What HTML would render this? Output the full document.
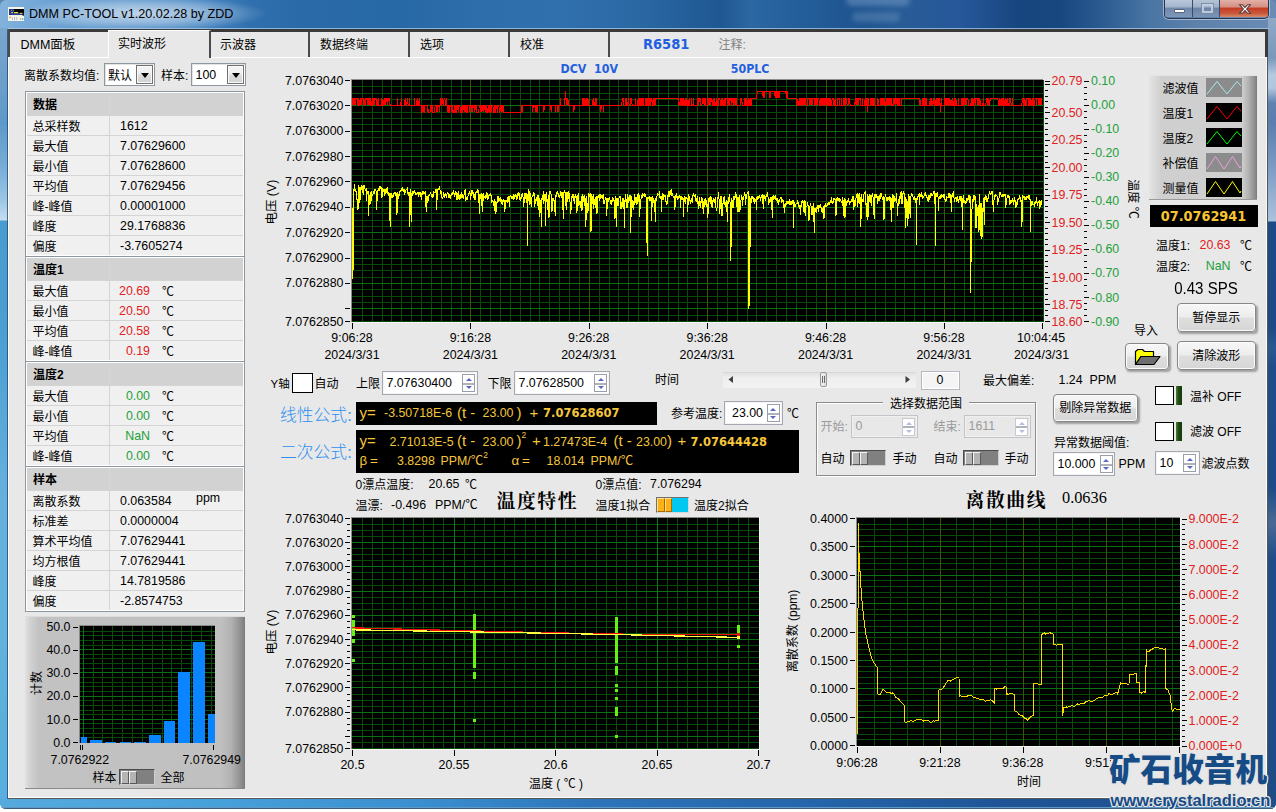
<!DOCTYPE html>
<html lang="zh"><head><meta charset="utf-8"><title>DMM PC-TOOL v1.20.02.28 by ZDD</title>
<style>
*{box-sizing:border-box;margin:0;padding:0}
html,body{width:1276px;height:812px;overflow:hidden;background:#fff}
body{position:relative;font-family:"Liberation Sans","Noto Sans CJK SC",sans-serif;font-size:12px;color:#000;line-height:1}
.a{position:absolute;white-space:nowrap}
.t{position:absolute;white-space:nowrap;height:16px;line-height:16px;font-size:12px}
.n{position:absolute;white-space:nowrap;height:16px;line-height:16px;font-size:12.4px}
.r{text-align:right}
.c{text-align:center}
svg{position:absolute;overflow:visible}
#win{position:absolute;left:0;top:0;width:1276px;height:809px;border-radius:6px 6px 6px 6px;overflow:hidden;
 background:linear-gradient(90deg,#82b2dc 0px,#6aa0d2 60px,#4a88c4 200px,#3070ae 250px,#2a6aa8 300px,#2768a6 400px,#2e6eaa 480px,#3070ac 560px,#2a68a4 640px,#1f5792 720px,#2b67a2 750px,#245e9a 800px,#1e5490 860px,#285c96 900px,#26589a 960px,#17457e 1020px,#18467f 1060px,#2a5a90 1100px,#4a75a4 1150px,#5f82ab 1200px,#6a8cb4 1276px)}
#glow{position:absolute;left:18px;top:0;width:250px;height:30px;background:radial-gradient(ellipse 125px 17px at 50% 45%,rgba(255,255,255,.62),rgba(255,255,255,.35) 55%,rgba(255,255,255,0) 100%)}
#lb{position:absolute;left:0;top:28px;width:8px;height:781px;background:linear-gradient(180deg,#7aa6ce 0,#6a9ecb 60px,#5c99c9 95px,#78aed8 140px,#9cc6e4 172px,#c6deef 192px,#4a9cd0 193px,#4a9ed2 300px,#66b0de 470px,#62b2de 600px,#5ab0da 700px,#58aee0 781px);border-right:1px solid rgba(30,70,110,.75)}
#rb{position:absolute;left:1268px;top:18px;width:8px;height:791px;background:linear-gradient(180deg,#8ea8c6 0,#8aa4c4 10px,#7a98bc 40px,#b4cae0 57px,#b0c6de 70px,#5f82b0 85px,#5a7eae 105px,#7c9cc4 150px,#a4bcd8 195px,#aac2dc 203px,#1d4b84 204px,#1d4a82 310px,#2a5990 330px,#1f4d86 350px,#1e4c84 470px,#4a6a95 505px,#1f4d86 540px,#1e4c85 791px)}
#bb{position:absolute;left:0;top:799px;width:1276px;height:10px;background:linear-gradient(90deg,#55aade 0,#48a2da 200px,#3a8fd0 420px,#2d74ba 600px,#2566ac 800px,#1f5596 1000px,#1e4f8c 1276px)}
#client{position:absolute;left:8px;top:29px;width:1260px;height:770px;background:#e8e8e8}

.tab{position:absolute;top:32px;height:25px;border-left:2px solid #4a4a4a;font-size:12px;line-height:27px;padding-left:10px;white-space:nowrap}
.wb{position:absolute;top:0;height:18px}

.tb{position:absolute;left:25px;width:220px;border:1px solid #8e96a0;background:#fff;padding:1px}
.tb .h{height:22px;background:#d2d2d2;border-bottom:0;font-weight:bold;font-size:12px;line-height:24px;padding-left:6px;position:relative}
.tb .h:after{content:"";position:absolute;left:82px;top:0;width:1px;height:22px;background:#d6d6d6}
.tb .w{height:20px;background:#f0f0f0;border-top:1px solid #d4d4d4;position:relative;line-height:19px}
.tb .w:after{content:"";position:absolute;left:82px;top:0;width:1px;height:19px;background:#d4d4d4}
.tb .k{position:absolute;left:5.5px;top:2px;font-size:12px}
.tb .v{position:absolute;left:93px;top:0.5px;font-size:12.4px}
.tb .vr{position:absolute;right:93px;top:0.5px;font-size:12.4px;text-align:right}
.tb .u{position:absolute;left:135px;top:1.5px;font-size:12px}
.cb{position:absolute;background:#fff;border:1px solid #8e96a0;box-shadow:inset 1px 1px 0 #e4e4e4}
.cbb{position:absolute;border:1px solid #707070;background:linear-gradient(180deg,#f6f6f6 0,#ececec 48%,#dcdcdc 52%,#d2d2d2 100%);box-shadow:inset 0 0 0 1px #fafafa}
.cbb:after{content:"";position:absolute;left:50%;top:50%;margin:-2px 0 0 -4px;border:4px solid transparent;border-top:5px solid #000;border-bottom:none}

.btn{position:absolute;border:1px solid #868686;border-radius:4px;background:linear-gradient(180deg,#f7f7f7 0,#ededed 47%,#dedede 53%,#d6d6d6 100%);box-shadow:inset 0 0 0 1px #fbfbfb,1.5px 2px 2px rgba(0,0,0,.32);text-align:center;font-size:12px}
.led{position:absolute;background:linear-gradient(90deg,#4f7a3a 0,#1f4a12 45%,#163a0c 100%)}
.chk{position:absolute;background:#fff;border:1px solid #000}

.inp{position:absolute;background:#fff;border:1px solid #a4a8b0;box-shadow:inset 0 0 0 1px #f4f4f4}
.inp.dis{background:#e8e8e8;border-color:#c4c4c8;box-shadow:inset 0 0 0 1px #f0f0f0}
.spn{position:absolute;width:13px;height:18px;border:1px solid #9a9ea8;background:#fff}
.spn:before{content:"";position:absolute;left:0;top:7.5px;width:11px;height:2px;background:#b0b2ba}
.spn i{position:absolute;left:2.5px;width:0;height:0;border:3px solid transparent}
.spn i.u{top:-0.5px;border-bottom:3.5px solid #5a66c4;border-top:none;top:3px}
.spn i.d{border-top:3.5px solid #5a66c4;border-bottom:none;top:11px}
.spn.dis{border-color:#c8c8d0}
.spn.dis i.u{border-bottom-color:#b8bce0}
.spn.dis i.d{border-top-color:#b8bce0}
.sw{position:absolute;width:36px;height:16px;background:#808080;border:1px solid;border-color:#4c4c4c #cfcfcf #cfcfcf #4c4c4c}
.sw b{position:absolute;top:0.5px;height:13.5px;width:8px;background:#b4b4b4;border:1px solid;border-color:#f4f4f4 #5a5a5a #5a5a5a #f4f4f4}
.fx{position:absolute;white-space:nowrap;color:#f5c63c;font-size:12.4px;height:20px;line-height:20px}
.fx.b{font-family:'DejaVu Sans Condensed','DejaVu Sans',sans-serif;font-stretch:condensed;font-weight:bold;font-size:12.8px}
.fx.g{font-size:15px}
.fx.g2{font-size:13.4px}
.fx sup{font-size:8.5px;position:relative;top:-1px;vertical-align:top;line-height:10px}
</style></head>
<body>
<div class="a" style="left:0;top:0;width:1276px;height:12px;background:#5f83ab"></div>
<div id="win">
<div id="glow"></div>
<svg style="left:8px;top:7px" width="16" height="14" viewBox="0 0 16 14"><rect x="0" y="0" width="16" height="14" fill="#f6f4ee"/><rect x="1" y="2" width="14.6" height="6" fill="#1f3a8a"/><rect x="6" y="2" width="9.6" height="4" fill="#000"/><rect x="14.6" y="2" width="1.2" height="6.8" fill="#000"/><rect x="3.3" y="5" width="1.5" height="1.3" fill="#f0d23c"/><rect x="6" y="5" width="4.2" height="1.3" fill="#f0d23c"/><rect x="11.7" y="5.8" width="2.7" height="1.1" fill="#f0d23c"/><rect x="3.2" y="3" width="1" height="1" fill="#d89a30"/><rect x="5.2" y="3" width="1" height="1" fill="#4a9a5a"/><rect x="1" y="9.8" width="2" height="1.1" fill="#eaa020"/><rect x="4" y="10" width="0.8" height="3" fill="#b8b8c0"/><rect x="6.2" y="10" width="0.8" height="3" fill="#a8a8b0"/><rect x="8.4" y="10" width="0.8" height="3" fill="#b0b0b8"/><rect x="11.8" y="11" width="1.4" height="1.6" fill="#e8b030"/><rect x="13.8" y="11.2" width="1.5" height="1.6" fill="#30c0e8"/></svg>
<div class="a" id="title" style="left:29px;top:4px;height:20px;line-height:20px;font-size:12.6px;color:#000">DMM PC-TOOL v1.20.02.28 by ZDD</div>
<div class="a" style="left:846px;top:-6px;width:64px;height:12px;border-radius:6px;background:rgba(150,180,215,.38);filter:blur(2.5px)"></div>
<div class="a" style="left:852px;top:12px;width:48px;height:10px;border-radius:5px;background:rgba(140,172,210,.30);filter:blur(2.5px)"></div>
<div class="a" style="left:1164px;top:-1px;width:105px;height:20px;border:1px solid #2a3550;border-top:none;border-radius:0 0 5px 5px;box-shadow:0 0 0 1px rgba(220,232,245,.55);overflow:hidden"><div class="wb" style="left:0;width:28px;background:linear-gradient(180deg,#bccadc 0,#a3b5cc 45%,#6d88ab 50%,#7d98b9 100%);border-right:1px solid #3a4a68"></div><div class="wb" style="left:28px;width:27px;background:linear-gradient(180deg,#b8c6d9 0,#a0b2c9 45%,#6a85a8 50%,#7a95b6 100%);border-right:1px solid #3a4a68"></div><div class="wb" style="left:55px;width:48px;background:linear-gradient(180deg,#e6b5ab 0,#d38f82 45%,#c33c22 50%,#c9583c 80%,#d98a6a 100%)"></div></div>
<div class="a" style="left:1174px;top:9px;width:11px;height:4px;background:#fff;border:1px solid #5a6478;border-radius:1px"></div>
<div class="a" style="left:1202px;top:4px;width:11px;height:9px;border:2px solid #c8d4e4;outline:1px solid #7a8aa4;opacity:.85"></div>
<svg style="left:1238px;top:2.5px" width="14" height="12" viewBox="0 0 13 11"><path d="M1.5 1.5 L4 1.5 L6.5 4 L9 1.5 L11.5 1.5 L8 5.5 L11.5 9.5 L9 9.5 L6.5 7 L4 9.5 L1.5 9.5 L5 5.5 Z" fill="#fff" stroke="#5a3a3a" stroke-width="1"/></svg>
<div id="lb"></div><div id="rb"></div><div id="bb"></div>
<div class="a" style="left:0;top:807px;width:1276px;height:2px;background:linear-gradient(180deg,#6fb6e6,#26415e)"></div>
<div id="client"></div>
<div class="a" style="left:7px;top:28px;width:1262px;height:1px;background:rgba(170,205,235,.75)"></div>
<div class="a" style="left:8px;top:29px;width:1260px;height:2.5px;background:#3a3a3a"></div>
<div class="a" style="left:8px;top:29px;width:2px;height:28px;background:#4a4a4a"></div>
<div class="a" style="left:1265px;top:29px;width:3px;height:28px;background:#3a3a3a"></div>
<div class="a" style="left:8px;top:57px;width:1258px;height:1px;background:#fff"></div>
<div class="a" style="left:8px;top:57px;width:1px;height:741px;background:#fff"></div>
<div class="a" style="left:1266px;top:57px;width:1px;height:741px;background:#fafafa"></div>
<div class="a" style="left:1267px;top:57px;width:1px;height:742px;background:#555"></div>
<div class="a" style="left:8px;top:797px;width:1259px;height:1px;background:#fff"></div>
<div class="a" style="left:8px;top:798px;width:1260px;height:1px;background:#555"></div>
<div class="tab" style="left:8px;width:100px;padding-left:10.5px;font-size:12.5px">DMM面板</div>
<div class="a" style="left:108px;top:30px;width:103px;height:28px;background:#e8e8e8;border-left:1px solid #fff;border-top:1px solid #fff;border-right:2px solid #4a4a4a;font-size:12px;line-height:26px;padding-left:9px">实时波形</div>
<div class="tab" style="left:209px;width:100px;border-left:none;padding-left:11px">示波器</div>
<div class="tab" style="left:308px;width:100px">数据终端</div>
<div class="tab" style="left:408px;width:100px">选项</div>
<div class="tab" style="left:508px;width:100px">校准</div>
<div class="tab" style="left:608px;width:10px"></div>
<div class="t" style="left:643px;top:34px;font-family:'DejaVu Sans Condensed','DejaVu Sans',sans-serif;font-stretch:condensed;font-weight:bold;font-size:14.5px;color:#1f5fe0;height:20px;line-height:20px">R6581</div>
<div class="t" style="left:718.5px;top:37px;color:#808080">注释:</div>
<div class="t" style="left:24px;top:68px;">离散系数均值:</div>
<div class="cb" style="left:104px;top:63px;width:51px;height:23px;"></div>
<div class="t" style="left:108px;top:68px;">默认</div>
<div class="cbb" style="left:136px;top:65px;width:17px;height:19px;"></div>
<div class="t" style="left:161px;top:68px;">样本:</div>
<div class="cb" style="left:191px;top:63px;width:55px;height:23px;"></div>
<div class="n" style="left:195.5px;top:67px;">100</div>
<div class="cbb" style="left:227px;top:65px;width:17px;height:19px;"></div>
<div class="tb" style="top:91px"><div class="h">数据</div><div class="w"><span class="k">总采样数</span><span class="v">1612</span></div><div class="w"><span class="k">最大值</span><span class="v">7.07629600</span></div><div class="w"><span class="k">最小值</span><span class="v">7.07628600</span></div><div class="w"><span class="k">平均值</span><span class="v">7.07629456</span></div><div class="w"><span class="k">峰-峰值</span><span class="v">0.00001000</span></div><div class="w"><span class="k">峰度</span><span class="v">29.1768836</span></div><div class="w"><span class="k">偏度</span><span class="v">-3.7605274</span></div></div>
<div class="tb" style="top:256px"><div class="h">温度1</div><div class="w"><span class="k">最大值</span><span class="vr" style="color:#e02020">20.69</span><span class="u">℃</span></div><div class="w"><span class="k">最小值</span><span class="vr" style="color:#e02020">20.50</span><span class="u">℃</span></div><div class="w"><span class="k">平均值</span><span class="vr" style="color:#e02020">20.58</span><span class="u">℃</span></div><div class="w"><span class="k">峰-峰值</span><span class="vr" style="color:#e02020">0.19</span><span class="u">℃</span></div></div>
<div class="tb" style="top:361px"><div class="h">温度2</div><div class="w"><span class="k">最大值</span><span class="vr" style="color:#22a03a">0.00</span><span class="u">℃</span></div><div class="w"><span class="k">最小值</span><span class="vr" style="color:#22a03a">0.00</span><span class="u">℃</span></div><div class="w"><span class="k">平均值</span><span class="vr" style="color:#22a03a">NaN</span><span class="u">℃</span></div><div class="w"><span class="k">峰-峰值</span><span class="vr" style="color:#22a03a">0.00</span><span class="u">℃</span></div></div>
<div class="tb" style="top:466px"><div class="h">样本</div><div class="w"><span class="k">离散系数</span><span class="v">0.063584</span><span class="u" style="left:169px;top:-2px;font-size:12.4px">ppm</span></div><div class="w"><span class="k">标准差</span><span class="v">0.0000004</span></div><div class="w"><span class="k">算术平均值</span><span class="v">7.07629441</span></div><div class="w"><span class="k">均方根值</span><span class="v">7.07629441</span></div><div class="w"><span class="k">峰度</span><span class="v">14.7819586</span></div><div class="w"><span class="k">偏度</span><span class="v">-2.8574753</span></div></div>
<svg style="left:0;top:0" width="1276" height="812" shape-rendering="crispEdges"><rect x="351" y="79" width="693" height="244" fill="#f6f6f6"/><rect x="351" y="79" width="692" height="243" fill="#8c8c8c"/><rect x="352" y="80" width="691" height="242" fill="#000"/><path d="M362.5 80V322M372.5 80V322M382.5 80V322M391.5 80V322M401.5 80V322M411.5 80V322M421.5 80V322M431.5 80V322M441.5 80V322M451.5 80V322M461.5 80V322M480.5 80V322M490.5 80V322M500.5 80V322M510.5 80V322M520.5 80V322M530.5 80V322M539.5 80V322M549.5 80V322M559.5 80V322M569.5 80V322M579.5 80V322M599.5 80V322M609.5 80V322M618.5 80V322M628.5 80V322M638.5 80V322M648.5 80V322M658.5 80V322M668.5 80V322M678.5 80V322M687.5 80V322M697.5 80V322M717.5 80V322M727.5 80V322M737.5 80V322M747.5 80V322M756.5 80V322M766.5 80V322M776.5 80V322M786.5 80V322M796.5 80V322M806.5 80V322M816.5 80V322M835.5 80V322M845.5 80V322M855.5 80V322M865.5 80V322M875.5 80V322M885.5 80V322M895.5 80V322M904.5 80V322M914.5 80V322M924.5 80V322M934.5 80V322M954.5 80V322M964.5 80V322M974.5 80V322M983.5 80V322M993.5 80V322M1003.5 80V322M1013.5 80V322M1023.5 80V322M1033.5 80V322M1043.5 80V322" stroke="#084c08" stroke-width="1" fill="none"/><path d="M352 86.5H1043M352 93.5H1043M352 99.5H1043M352 112.5H1043M352 118.5H1043M352 124.5H1043M352 137.5H1043M352 143.5H1043M352 150.5H1043M352 162.5H1043M352 169.5H1043M352 175.5H1043M352 188.5H1043M352 194.5H1043M352 201.5H1043M352 213.5H1043M352 220.5H1043M352 226.5H1043M352 239.5H1043M352 245.5H1043M352 251.5H1043M352 264.5H1043M352 270.5H1043M352 277.5H1043M352 289.5H1043M352 296.5H1043M352 302.5H1043M352 315.5H1043M352 321.5H1043" stroke="#084c08" stroke-width="1" fill="none"/><path d="M352 105.5H1043M352 131.5H1043M352 156.5H1043M352 181.5H1043M352 207.5H1043M352 232.5H1043M352 258.5H1043M352 283.5H1043M352 308.5H1043" stroke="#087214" stroke-width="1" fill="none"/><path d="M470.5 80V322M589.5 80V322M707.5 80V322M826.5 80V322M944.5 80V322" stroke="#3c5800" stroke-width="1" fill="none"/><path d="M352 98.4 352.4 98.4 352.9 105.2 353.3 98.4 353.7 105.2 354.1 98.4 354.6 98.4 355 105.2 355.4 98.4 355.9 98.4 356.3 98.4 356.7 98.4 357.1 98.4 357.6 105.2 358 98.4 358.4 98.4 358.9 105.2 359.3 105.2 359.7 105.2 360.1 98.4 360.6 105.2 361 98.4 361.4 105.2 361.9 98.4 362.3 98.4 362.7 98.4 363.1 98.4 363.6 105.2 364 98.4 364.4 105.2 364.8 105.2 365.3 98.4 365.7 105.2 366.1 98.4 366.6 98.4 367 98.4 367.4 105.2 367.8 98.4 368.3 98.4 368.7 105.2 369.1 98.4 369.6 98.4 370 105.2 370.4 105.2 370.8 98.4 371.3 105.2 371.7 105.2 372.1 105.2 372.6 105.2 373 98.4 373.4 105.2 373.8 98.4 374.3 98.4 374.7 105.2 375.1 98.4 375.6 98.4 376 98.4 376.4 105.2 376.8 105.2 377.3 105.2 377.7 105.2 378.1 98.4 378.6 105.2 379 105.2 379.4 105.2 379.8 105.2 380.3 105.2 380.7 105.2 381.1 105.2 381.6 105.2 382 98.4 382.4 105.2 382.8 105.2 383.3 105.2 383.7 105.2 384.1 98.4 384.6 98.4 385 105.2 385.4 98.4 385.8 105.2 386.3 98.4 386.7 98.4 387.1 98.4 387.5 105.2 388 98.4 388.4 98.4 388.8 98.4 389.3 105.2 389.7 98.4 390.1 105.2 390.5 105.2 391 105.2 391.4 105.2 391.8 105.2 392.3 105.2 392.7 105.2 393.1 105.2 393.5 105.2 394 105.2 394.4 105.2 394.8 105.2 395.3 105.2 395.7 105.2 396.1 105.2 396.5 105.2 397 105.2 397.4 98.4 397.8 105.2 398.3 105.2 398.7 105.2 399.1 105.2 399.5 105.2 400 105.2 400.4 105.2 400.8 105.2 401.3 98.4 401.7 105.2 402.1 105.2 402.5 105.2 403 105.2 403.4 105.2 403.8 105.2 404.3 105.2 404.7 105.2 405.1 98.4 405.5 98.4 406 105.2 406.4 105.2 406.8 105.2 407.3 98.4 407.7 98.4 408.1 105.2 408.5 105.2 409 105.2 409.4 98.4 409.8 105.2 410.2 105.2 410.7 105.2 411.1 105.2 411.5 105.2 412 105.2 412.4 105.2 412.8 105.2 413.2 105.2 413.7 105.2 414.1 105.2 414.5 98.4 415 105.2 415.4 105.2 415.8 105.2 416.2 105.2 416.7 105.2 417.1 98.4 417.5 105.2 418 105.2 418.4 105.2 418.8 105.2 419.2 98.4 419.7 105.2 420.1 105.2 420.5 105.2 421 105.2 421.4 112.1 421.8 112.1 422.2 112.1 422.7 105.2 423.1 105.2 423.5 105.2 424 112.1 424.4 112.1 424.8 105.2 425.2 105.2 425.7 105.2 426.1 105.2 426.5 105.2 427 105.2 427.4 112.1 427.8 105.2 428.2 112.1 428.7 112.1 429.1 112.1 429.5 112.1 430 112.1 430.4 105.2 430.8 105.2 431.2 112.1 431.7 105.2 432.1 105.2 432.5 105.2 432.9 112.1 433.4 112.1 433.8 112.1 434.2 112.1 434.7 112.1 435.1 105.2 435.5 105.2 435.9 105.2 436.4 112.1 436.8 105.2 437.2 105.2 437.7 112.1 438.1 105.2 438.5 105.2 438.9 105.2 439.4 105.2 439.8 112.1 440.2 98.4 440.7 105.2 441.1 98.4 441.5 105.2 441.9 105.2 442.4 98.4 442.8 98.4 443.2 105.2 443.7 105.2 444.1 98.4 444.5 98.4 444.9 98.4 445.4 105.2 445.8 105.2 446.2 98.4 446.7 105.2 447.1 105.2 447.5 105.2 447.9 112.1 448.4 105.2 448.8 112.1 449.2 112.1 449.7 105.2 450.1 105.2 450.5 105.2 450.9 105.2 451.4 112.1 451.8 105.2 452.2 105.2 452.7 112.1 453.1 112.1 453.5 112.1 453.9 112.1 454.4 105.2 454.8 112.1 455.2 112.1 455.6 112.1 456.1 105.2 456.5 112.1 456.9 112.1 457.4 105.2 457.8 105.2 458.2 112.1 458.6 105.2 459.1 105.2 459.5 105.2 459.9 105.2 460.4 112.1 460.8 112.1 461.2 112.1 461.6 112.1 462.1 105.2 462.5 112.1 462.9 112.1 463.4 105.2 463.8 105.2 464.2 112.1 464.6 105.2 465.1 105.2 465.5 105.2 465.9 112.1 466.4 105.2 466.8 112.1 467.2 112.1 467.6 105.2 468.1 105.2 468.5 105.2 468.9 105.2 469.4 105.2 469.8 112.1 470.2 105.2 470.6 105.2 471.1 105.2 471.5 105.2 471.9 112.1 472.4 105.2 472.8 112.1 473.2 105.2 473.6 105.2 474.1 105.2 474.5 105.2 474.9 112.1 475.4 105.2 475.8 105.2 476.2 105.2 476.6 112.1 477.1 112.1 477.5 112.1 477.9 112.1 478.4 112.1 478.8 112.1 479.2 105.2 479.6 105.2 480.1 105.2 480.5 112.1 480.9 105.2 481.3 105.2 481.8 112.1 482.2 105.2 482.6 105.2 483.1 112.1 483.5 105.2 483.9 112.1 484.3 105.2 484.8 105.2 485.2 105.2 485.6 112.1 486.1 105.2 486.5 105.2 486.9 112.1 487.3 112.1 487.8 112.1 488.2 105.2 488.6 112.1 489.1 105.2 489.5 105.2 489.9 112.1 490.3 112.1 490.8 105.2 491.2 105.2 491.6 112.1 492.1 105.2 492.5 105.2 492.9 105.2 493.3 112.1 493.8 112.1 494.2 112.1 494.6 105.2 495.1 112.1 495.5 112.1 495.9 105.2 496.3 105.2 496.8 105.2 497.2 112.1 497.6 112.1 498.1 105.2 498.5 105.2 498.9 105.2 499.3 112.1 499.8 112.1 500.2 105.2 500.6 105.2 501.1 112.1 501.5 105.2 501.9 105.2 502.3 105.2 502.8 112.1 503.2 105.2 503.6 112.1 504 112.1 504.5 112.1 504.9 112.1 505.3 112.1 505.8 112.1 506.2 112.1 506.6 112.1 507 112.1 507.5 112.1 507.9 112.1 508.3 112.1 508.8 112.1 509.2 112.1 509.6 112.1 510 112.1 510.5 112.1 510.9 112.1 511.3 112.1 511.8 112.1 512.2 112.1 512.6 112.1 513 112.1 513.5 112.1 513.9 112.1 514.3 112.1 514.8 112.1 515.2 112.1 515.6 112.1 516 112.1 516.5 112.1 516.9 112.1 517.3 112.1 517.8 112.1 518.2 112.1 518.6 112.1 519 112.1 519.5 112.1 519.9 112.1 520.3 112.1 520.8 112.1 521.2 112.1 521.6 112.1 522 105.2 522.5 112.1 522.9 105.2 523.3 105.2 523.8 105.2 524.2 105.2 524.6 105.2 525 105.2 525.5 105.2 525.9 105.2 526.3 105.2 526.7 105.2 527.2 105.2 527.6 105.2 528 105.2 528.5 105.2 528.9 105.2 529.3 105.2 529.7 105.2 530.2 105.2 530.6 105.2 531 105.2 531.5 105.2 531.9 105.2 532.3 105.2 532.7 112.1 533.2 105.2 533.6 105.2 534 105.2 534.5 105.2 534.9 105.2 535.3 112.1 535.7 105.2 536.2 105.2 536.6 105.2 537 112.1 537.5 112.1 537.9 105.2 538.3 105.2 538.7 105.2 539.2 105.2 539.6 105.2 540 105.2 540.5 105.2 540.9 105.2 541.3 105.2 541.7 105.2 542.2 105.2 542.6 105.2 543 105.2 543.5 105.2 543.9 112.1 544.3 105.2 544.7 105.2 545.2 105.2 545.6 105.2 546 105.2 546.5 105.2 546.9 105.2 547.3 105.2 547.7 105.2 548.2 105.2 548.6 105.2 549 105.2 549.4 105.2 549.9 105.2 550.3 105.2 550.7 105.2 551.2 112.1 551.6 105.2 552 105.2 552.4 105.2 552.9 105.2 553.3 105.2 553.7 105.2 554.2 105.2 554.6 105.2 555 105.2 555.4 112.1 555.9 105.2 556.3 105.2 556.7 105.2 557.2 105.2 557.6 105.2 558 112.1 558.4 105.2 558.9 105.2 559.3 105.2 559.7 105.2 560.2 105.2 560.6 98.4 561 105.2 561.4 105.2 561.9 105.2 562.3 105.2 562.7 105.2 563.2 105.2 563.6 105.2 564 105.2 564.4 105.2 564.9 98.4 565.3 98.4 565.7 91.5 566.2 105.2 566.6 98.4 567 105.2 567.4 98.4 567.9 98.4 568.3 105.2 568.7 105.2 569.2 105.2 569.6 105.2 570 105.2 570.4 105.2 570.9 105.2 571.3 105.2 571.7 105.2 572.1 105.2 572.6 105.2 573 105.2 573.4 105.2 573.9 112.1 574.3 105.2 574.7 105.2 575.1 105.2 575.6 105.2 576 105.2 576.4 105.2 576.9 105.2 577.3 105.2 577.7 105.2 578.1 105.2 578.6 105.2 579 105.2 579.4 105.2 579.9 105.2 580.3 105.2 580.7 105.2 581.1 105.2 581.6 105.2 582 105.2 582.4 105.2 582.9 98.4 583.3 98.4 583.7 105.2 584.1 105.2 584.6 105.2 585 98.4 585.4 105.2 585.9 105.2 586.3 105.2 586.7 98.4 587.1 105.2 587.6 105.2 588 98.4 588.4 105.2 588.9 105.2 589.3 105.2 589.7 105.2 590.1 105.2 590.6 105.2 591 105.2 591.4 105.2 591.9 105.2 592.3 105.2 592.7 105.2 593.1 98.4 593.6 98.4 594 105.2 594.4 105.2 594.8 105.2 595.3 98.4 595.7 105.2 596.1 105.2 596.6 98.4 597 105.2 597.4 105.2 597.8 105.2 598.3 105.2 598.7 105.2 599.1 105.2 599.6 105.2 600 105.2 600.4 105.2 600.8 112.1 601.3 105.2 601.7 105.2 602.1 105.2 602.6 105.2 603 105.2 603.4 112.1 603.8 105.2 604.3 105.2 604.7 105.2 605.1 105.2 605.6 105.2 606 105.2 606.4 105.2 606.8 105.2 607.3 105.2 607.7 105.2 608.1 105.2 608.6 105.2 609 105.2 609.4 105.2 609.8 105.2 610.3 105.2 610.7 105.2 611.1 105.2 611.6 105.2 612 105.2 612.4 105.2 612.8 105.2 613.3 105.2 613.7 105.2 614.1 105.2 614.6 105.2 615 105.2 615.4 105.2 615.8 105.2 616.3 105.2 616.7 105.2 617.1 105.2 617.5 105.2 618 105.2 618.4 105.2 618.8 105.2 619.3 105.2 619.7 105.2 620.1 105.2 620.5 105.2 621 105.2 621.4 105.2 621.8 105.2 622.3 98.4 622.7 98.4 623.1 98.4 623.5 98.4 624 105.2 624.4 105.2 624.8 105.2 625.3 105.2 625.7 98.4 626.1 98.4 626.5 105.2 627 105.2 627.4 105.2 627.8 105.2 628.3 98.4 628.7 98.4 629.1 105.2 629.5 105.2 630 105.2 630.4 105.2 630.8 98.4 631.3 98.4 631.7 98.4 632.1 105.2 632.5 105.2 633 105.2 633.4 105.2 633.8 105.2 634.3 105.2 634.7 105.2 635.1 105.2 635.5 98.4 636 105.2 636.4 105.2 636.8 105.2 637.3 105.2 637.7 105.2 638.1 98.4 638.5 105.2 639 105.2 639.4 105.2 639.8 98.4 640.2 98.4 640.7 105.2 641.1 105.2 641.5 98.4 642 98.4 642.4 105.2 642.8 98.4 643.2 98.4 643.7 105.2 644.1 105.2 644.5 105.2 645 105.2 645.4 105.2 645.8 98.4 646.2 98.4 646.7 105.2 647.1 105.2 647.5 98.4 648 98.4 648.4 105.2 648.8 105.2 649.2 105.2 649.7 98.4 650.1 105.2 650.5 105.2 651 98.4 651.4 98.4 651.8 98.4 652.2 105.2 652.7 105.2 653.1 98.4 653.5 105.2 654 105.2 654.4 105.2 654.8 98.4 655.2 105.2 655.7 98.4 656.1 98.4 656.5 98.4 657 98.4 657.4 98.4 657.8 98.4 658.2 98.4 658.7 98.4 659.1 98.4 659.5 98.4 660 98.4 660.4 98.4 660.8 98.4 661.2 98.4 661.7 98.4 662.1 98.4 662.5 98.4 662.9 98.4 663.4 98.4 663.8 98.4 664.2 98.4 664.7 98.4 665.1 98.4 665.5 98.4 665.9 98.4 666.4 98.4 666.8 98.4 667.2 98.4 667.7 98.4 668.1 98.4 668.5 98.4 668.9 98.4 669.4 98.4 669.8 98.4 670.2 98.4 670.7 98.4 671.1 98.4 671.5 98.4 671.9 98.4 672.4 98.4 672.8 98.4 673.2 98.4 673.7 98.4 674.1 98.4 674.5 98.4 674.9 98.4 675.4 98.4 675.8 98.4 676.2 98.4 676.7 98.4 677.1 98.4 677.5 98.4 677.9 98.4 678.4 105.2 678.8 98.4 679.2 105.2 679.7 105.2 680.1 105.2 680.5 98.4 680.9 98.4 681.4 98.4 681.8 105.2 682.2 98.4 682.7 105.2 683.1 105.2 683.5 105.2 683.9 98.4 684.4 105.2 684.8 105.2 685.2 98.4 685.6 105.2 686.1 105.2 686.5 98.4 686.9 98.4 687.4 105.2 687.8 105.2 688.2 105.2 688.6 105.2 689.1 98.4 689.5 98.4 689.9 105.2 690.4 105.2 690.8 105.2 691.2 105.2 691.6 98.4 692.1 105.2 692.5 105.2 692.9 105.2 693.4 98.4 693.8 105.2 694.2 105.2 694.6 105.2 695.1 105.2 695.5 105.2 695.9 105.2 696.4 105.2 696.8 105.2 697.2 105.2 697.6 98.4 698.1 98.4 698.5 105.2 698.9 98.4 699.4 98.4 699.8 98.4 700.2 105.2 700.6 98.4 701.1 105.2 701.5 105.2 701.9 105.2 702.4 98.4 702.8 98.4 703.2 98.4 703.6 98.4 704.1 105.2 704.5 98.4 704.9 98.4 705.4 98.4 705.8 105.2 706.2 105.2 706.6 105.2 707.1 105.2 707.5 105.2 707.9 98.4 708.4 105.2 708.8 98.4 709.2 105.2 709.6 98.4 710.1 105.2 710.5 98.4 710.9 98.4 711.3 98.4 711.8 98.4 712.2 105.2 712.6 105.2 713.1 98.4 713.5 98.4 713.9 105.2 714.3 105.2 714.8 98.4 715.2 105.2 715.6 105.2 716.1 105.2 716.5 98.4 716.9 98.4 717.3 105.2 717.8 105.2 718.2 105.2 718.6 98.4 719.1 98.4 719.5 98.4 719.9 98.4 720.3 105.2 720.8 105.2 721.2 105.2 721.6 98.4 722.1 105.2 722.5 98.4 722.9 98.4 723.3 105.2 723.8 105.2 724.2 98.4 724.6 105.2 725.1 105.2 725.5 98.4 725.9 98.4 726.3 98.4 726.8 98.4 727.2 98.4 727.6 105.2 728.1 105.2 728.5 98.4 728.9 98.4 729.3 98.4 729.8 105.2 730.2 98.4 730.6 98.4 731.1 98.4 731.5 105.2 731.9 105.2 732.3 98.4 732.8 98.4 733.2 98.4 733.6 105.2 734 105.2 734.5 98.4 734.9 98.4 735.3 105.2 735.8 98.4 736.2 98.4 736.6 105.2 737 105.2 737.5 105.2 737.9 105.2 738.3 105.2 738.8 105.2 739.2 105.2 739.6 105.2 740 105.2 740.5 98.4 740.9 105.2 741.3 98.4 741.8 98.4 742.2 105.2 742.6 105.2 743 105.2 743.5 105.2 743.9 105.2 744.3 105.2 744.8 98.4 745.2 98.4 745.6 105.2 746 105.2 746.5 105.2 746.9 98.4 747.3 105.2 747.8 105.2 748.2 105.2 748.6 98.4 749 98.4 749.5 105.2 749.9 105.2 750.3 98.4 750.8 105.2 751.2 105.2 751.6 105.2 752 98.4 752.5 98.4 752.9 98.4 753.3 98.4 753.8 98.4 754.2 98.4 754.6 98.4 755 98.4 755.5 98.4 755.9 98.4 756.3 98.4 756.7 98.4 757.2 91.5 757.6 91.5 758 91.5 758.5 91.5 758.9 91.5 759.3 91.5 759.7 91.5 760.2 91.5 760.6 91.5 761 91.5 761.5 91.5 761.9 91.5 762.3 91.5 762.7 91.5 763.2 98.4 763.6 91.5 764 91.5 764.5 98.4 764.9 91.5 765.3 91.5 765.7 91.5 766.2 91.5 766.6 91.5 767 91.5 767.5 91.5 767.9 91.5 768.3 91.5 768.7 91.5 769.2 91.5 769.6 91.5 770 98.4 770.5 91.5 770.9 91.5 771.3 91.5 771.7 91.5 772.2 91.5 772.6 91.5 773 91.5 773.5 91.5 773.9 91.5 774.3 91.5 774.7 91.5 775.2 98.4 775.6 91.5 776 91.5 776.5 98.4 776.9 91.5 777.3 98.4 777.7 91.5 778.2 91.5 778.6 91.5 779 98.4 779.4 91.5 779.9 91.5 780.3 91.5 780.7 91.5 781.2 91.5 781.6 91.5 782 91.5 782.4 91.5 782.9 91.5 783.3 91.5 783.7 91.5 784.2 91.5 784.6 91.5 785 91.5 785.4 91.5 785.9 91.5 786.3 98.4 786.7 91.5 787.2 91.5 787.6 91.5 788 98.4 788.4 98.4 788.9 98.4 789.3 98.4 789.7 98.4 790.2 98.4 790.6 98.4 791 98.4 791.4 98.4 791.9 98.4 792.3 98.4 792.7 98.4 793.2 98.4 793.6 98.4 794 98.4 794.4 98.4 794.9 98.4 795.3 98.4 795.7 98.4 796.2 98.4 796.6 105.2 797 98.4 797.4 105.2 797.9 105.2 798.3 105.2 798.7 105.2 799.2 98.4 799.6 105.2 800 105.2 800.4 98.4 800.9 105.2 801.3 98.4 801.7 105.2 802.1 105.2 802.6 98.4 803 105.2 803.4 98.4 803.9 98.4 804.3 105.2 804.7 98.4 805.1 105.2 805.6 98.4 806 105.2 806.4 105.2 806.9 105.2 807.3 105.2 807.7 98.4 808.1 98.4 808.6 98.4 809 98.4 809.4 105.2 809.9 98.4 810.3 98.4 810.7 105.2 811.1 98.4 811.6 98.4 812 105.2 812.4 98.4 812.9 98.4 813.3 98.4 813.7 98.4 814.1 98.4 814.6 98.4 815 105.2 815.4 105.2 815.9 98.4 816.3 105.2 816.7 98.4 817.1 98.4 817.6 105.2 818 98.4 818.4 98.4 818.9 98.4 819.3 105.2 819.7 105.2 820.1 105.2 820.6 98.4 821 98.4 821.4 98.4 821.9 105.2 822.3 105.2 822.7 98.4 823.1 105.2 823.6 98.4 824 105.2 824.4 105.2 824.8 98.4 825.3 105.2 825.7 98.4 826.1 105.2 826.6 105.2 827 98.4 827.4 98.4 827.8 105.2 828.3 98.4 828.7 105.2 829.1 105.2 829.6 98.4 830 98.4 830.4 105.2 830.8 105.2 831.3 105.2 831.7 105.2 832.1 98.4 832.6 98.4 833 98.4 833.4 98.4 833.8 105.2 834.3 105.2 834.7 105.2 835.1 98.4 835.6 105.2 836 105.2 836.4 105.2 836.8 105.2 837.3 105.2 837.7 98.4 838.1 98.4 838.6 98.4 839 98.4 839.4 98.4 839.8 105.2 840.3 105.2 840.7 105.2 841.1 105.2 841.6 98.4 842 105.2 842.4 105.2 842.8 105.2 843.3 105.2 843.7 98.4 844.1 105.2 844.6 105.2 845 98.4 845.4 105.2 845.8 98.4 846.3 98.4 846.7 98.4 847.1 105.2 847.5 105.2 848 105.2 848.4 98.4 848.8 105.2 849.3 98.4 849.7 98.4 850.1 105.2 850.5 105.2 851 105.2 851.4 105.2 851.8 105.2 852.3 105.2 852.7 105.2 853.1 105.2 853.5 105.2 854 105.2 854.4 105.2 854.8 105.2 855.3 98.4 855.7 98.4 856.1 105.2 856.5 98.4 857 105.2 857.4 98.4 857.8 98.4 858.3 98.4 858.7 105.2 859.1 98.4 859.5 98.4 860 98.4 860.4 98.4 860.8 105.2 861.3 105.2 861.7 105.2 862.1 105.2 862.5 98.4 863 105.2 863.4 105.2 863.8 105.2 864.3 105.2 864.7 105.2 865.1 98.4 865.5 105.2 866 105.2 866.4 105.2 866.8 98.4 867.3 112.1 867.7 98.4 868.1 98.4 868.5 105.2 869 105.2 869.4 105.2 869.8 105.2 870.2 105.2 870.7 98.4 871.1 98.4 871.5 98.4 872 105.2 872.4 98.4 872.8 105.2 873.2 105.2 873.7 98.4 874.1 98.4 874.5 98.4 875 105.2 875.4 105.2 875.8 105.2 876.2 105.2 876.7 105.2 877.1 105.2 877.5 105.2 878 98.4 878.4 105.2 878.8 105.2 879.2 105.2 879.7 105.2 880.1 105.2 880.5 105.2 881 98.4 881.4 105.2 881.8 98.4 882.2 105.2 882.7 98.4 883.1 98.4 883.5 98.4 884 105.2 884.4 105.2 884.8 98.4 885.2 105.2 885.7 105.2 886.1 105.2 886.5 98.4 887 105.2 887.4 98.4 887.8 105.2 888.2 98.4 888.7 105.2 889.1 98.4 889.5 98.4 890 105.2 890.4 105.2 890.8 98.4 891.2 105.2 891.7 98.4 892.1 105.2 892.5 105.2 892.9 105.2 893.4 105.2 893.8 98.4 894.2 98.4 894.7 98.4 895.1 105.2 895.5 98.4 895.9 105.2 896.4 98.4 896.8 98.4 897.2 98.4 897.7 105.2 898.1 105.2 898.5 98.4 898.9 105.2 899.4 98.4 899.8 105.2 900.2 105.2 900.7 105.2 901.1 105.2 901.5 105.2 901.9 98.4 902.4 98.4 902.8 98.4 903.2 98.4 903.7 98.4 904.1 98.4 904.5 98.4 904.9 98.4 905.4 98.4 905.8 98.4 906.2 98.4 906.7 98.4 907.1 98.4 907.5 98.4 907.9 98.4 908.4 98.4 908.8 98.4 909.2 98.4 909.7 98.4 910.1 98.4 910.5 98.4 910.9 98.4 911.4 98.4 911.8 98.4 912.2 98.4 912.7 98.4 913.1 98.4 913.5 98.4 913.9 98.4 914.4 98.4 914.8 98.4 915.2 98.4 915.6 98.4 916.1 98.4 916.5 98.4 916.9 98.4 917.4 98.4 917.8 98.4 918.2 98.4 918.6 98.4 919.1 98.4 919.5 105.2 919.9 98.4 920.4 105.2 920.8 105.2 921.2 105.2 921.6 105.2 922.1 105.2 922.5 98.4 922.9 105.2 923.4 98.4 923.8 105.2 924.2 105.2 924.6 98.4 925.1 105.2 925.5 105.2 925.9 98.4 926.4 98.4 926.8 105.2 927.2 105.2 927.6 105.2 928.1 105.2 928.5 105.2 928.9 105.2 929.4 105.2 929.8 105.2 930.2 98.4 930.6 105.2 931.1 98.4 931.5 98.4 931.9 105.2 932.4 105.2 932.8 105.2 933.2 98.4 933.6 98.4 934.1 105.2 934.5 105.2 934.9 98.4 935.4 105.2 935.8 105.2 936.2 98.4 936.6 105.2 937.1 105.2 937.5 98.4 937.9 105.2 938.4 105.2 938.8 98.4 939.2 105.2 939.6 98.4 940.1 105.2 940.5 112.1 940.9 105.2 941.3 98.4 941.8 105.2 942.2 105.2 942.6 105.2 943.1 105.2 943.5 105.2 943.9 105.2 944.3 105.2 944.8 98.4 945.2 105.2 945.6 98.4 946.1 105.2 946.5 98.4 946.9 105.2 947.3 98.4 947.8 105.2 948.2 105.2 948.6 98.4 949.1 98.4 949.5 105.2 949.9 98.4 950.3 105.2 950.8 105.2 951.2 105.2 951.6 105.2 952.1 98.4 952.5 98.4 952.9 105.2 953.3 105.2 953.8 105.2 954.2 98.4 954.6 105.2 955.1 105.2 955.5 98.4 955.9 98.4 956.3 105.2 956.8 105.2 957.2 105.2 957.6 105.2 958.1 105.2 958.5 98.4 958.9 105.2 959.3 105.2 959.8 105.2 960.2 105.2 960.6 105.2 961.1 105.2 961.5 98.4 961.9 105.2 962.3 98.4 962.8 105.2 963.2 105.2 963.6 105.2 964 98.4 964.5 105.2 964.9 98.4 965.3 105.2 965.8 98.4 966.2 98.4 966.6 105.2 967 98.4 967.5 98.4 967.9 98.4 968.3 105.2 968.8 105.2 969.2 105.2 969.6 105.2 970 105.2 970.5 105.2 970.9 105.2 971.3 98.4 971.8 105.2 972.2 105.2 972.6 105.2 973 98.4 973.5 105.2 973.9 105.2 974.3 98.4 974.8 98.4 975.2 105.2 975.6 105.2 976 98.4 976.5 98.4 976.9 98.4 977.3 98.4 977.8 105.2 978.2 98.4 978.6 98.4 979 105.2 979.5 105.2 979.9 98.4 980.3 105.2 980.8 105.2 981.2 105.2 981.6 105.2 982 105.2 982.5 105.2 982.9 105.2 983.3 98.4 983.8 105.2 984.2 105.2 984.6 105.2 985 105.2 985.5 105.2 985.9 105.2 986.3 98.4 986.7 98.4 987.2 98.4 987.6 105.2 988 98.4 988.5 105.2 988.9 98.4 989.3 105.2 989.7 105.2 990.2 98.4 990.6 98.4 991 98.4 991.5 98.4 991.9 98.4 992.3 98.4 992.7 98.4 993.2 98.4 993.6 98.4 994 98.4 994.5 98.4 994.9 98.4 995.3 98.4 995.7 98.4 996.2 98.4 996.6 98.4 997 98.4 997.5 98.4 997.9 98.4 998.3 105.2 998.7 105.2 999.2 105.2 999.6 105.2 1000 98.4 1000.5 105.2 1000.9 105.2 1001.3 98.4 1001.7 105.2 1002.2 98.4 1002.6 105.2 1003 105.2 1003.5 105.2 1003.9 98.4 1004.3 105.2 1004.7 105.2 1005.2 105.2 1005.6 105.2 1006 98.4 1006.5 105.2 1006.9 105.2 1007.3 105.2 1007.7 98.4 1008.2 105.2 1008.6 105.2 1009 105.2 1009.4 105.2 1009.9 98.4 1010.3 98.4 1010.7 98.4 1011.2 105.2 1011.6 105.2 1012 105.2 1012.4 98.4 1012.9 105.2 1013.3 105.2 1013.7 105.2 1014.2 105.2 1014.6 105.2 1015 105.2 1015.4 105.2 1015.9 105.2 1016.3 105.2 1016.7 105.2 1017.2 105.2 1017.6 105.2 1018 105.2 1018.4 105.2 1018.9 105.2 1019.3 105.2 1019.7 105.2 1020.2 105.2 1020.6 105.2 1021 105.2 1021.4 105.2 1021.9 105.2 1022.3 98.4 1022.7 98.4 1023.2 98.4 1023.6 105.2 1024 105.2 1024.4 105.2 1024.9 98.4 1025.3 105.2 1025.7 105.2 1026.2 105.2 1026.6 98.4 1027 98.4 1027.4 98.4 1027.9 98.4 1028.3 98.4 1028.7 105.2 1029.2 105.2 1029.6 98.4 1030 105.2 1030.4 98.4 1030.9 98.4 1031.3 105.2 1031.7 105.2 1032.1 105.2 1032.6 98.4 1033 98.4 1033.4 98.4 1033.9 105.2 1034.3 105.2 1034.7 105.2 1035.1 98.4 1035.6 98.4 1036 98.4 1036.4 105.2 1036.9 98.4 1037.3 98.4 1037.7 98.4 1038.1 98.4 1038.6 105.2 1039 98.4 1039.4 105.2 1039.9 98.4 1040.3 105.2 1040.7 98.4 1041.1 98.4 1041.6 105.2 1042 98.4" stroke="#ff0000" stroke-width="1" fill="none" stroke-linejoin="miter"/><path d="M352 208 352.4 209 352.9 279 353.3 250 353.7 206 354.1 184.5 354.6 188.4 355 191 355.4 188.8 355.9 191.5 356.3 191.4 356.7 199.2 357.1 199.2 357.6 203.2 358 209.6 358.4 191 358.9 185 359.3 192 359.7 202.7 360.1 198.7 360.6 187.8 361 188.3 361.4 190.3 361.9 185.5 362.3 188.6 362.7 187.5 363.1 194.8 363.6 191.5 364 185.5 364.4 186.4 364.8 188.6 365.3 189.4 365.7 190.7 366.1 188.3 366.6 201.2 367 194 367.4 191.2 367.8 191.3 368.3 191.3 368.7 216.4 369.1 201.6 369.6 198.1 370 194.8 370.4 191.7 370.8 203.7 371.3 190.8 371.7 201.3 372.1 195.1 372.6 194.8 373 193.9 373.4 193.5 373.8 191.2 374.3 194.3 374.7 191 375.1 188.8 375.6 190.7 376 191.3 376.4 191.9 376.8 209.5 377.3 190.7 377.7 192.1 378.1 189.2 378.6 191.4 379 188.2 379.4 186.4 379.8 189.2 380.3 188.2 380.7 187 381.1 187.3 381.6 190.2 382 198 382.4 188.4 382.8 191.7 383.3 190.5 383.7 192.1 384.1 189.4 384.6 195.8 385 191 385.4 190.1 385.8 193.5 386.3 191.4 386.7 191.6 387.1 187.4 387.5 192 388 193.8 388.4 194.6 388.8 192.4 389.3 194.4 389.7 200 390.1 227 390.5 193.1 391 194.8 391.4 197.8 391.8 193.3 392.3 197.6 392.7 195 393.1 196.4 393.5 195.4 394 192.8 394.4 193.1 394.8 192.4 395.3 196.3 395.7 193.3 396.1 193.7 396.5 194 397 215 397.4 192.5 397.8 196.8 398.3 193.9 398.7 198.9 399.1 194.6 399.5 192.4 400 191.6 400.4 191.1 400.8 190.9 401.3 188.8 401.7 190.2 402.1 189.7 402.5 187.2 403 190.6 403.4 190.5 403.8 189 404.3 195 404.7 188.9 405.1 190.1 405.5 191.8 406 190.3 406.4 189.5 406.8 189.5 407.3 187.5 407.7 190 408.1 195.5 408.5 192.4 409 193.8 409.4 193.1 409.8 227 410.2 189.6 410.7 191.3 411.1 222 411.5 192.7 412 194 412.4 194.7 412.8 191.9 413.2 191.5 413.7 193.6 414.1 190.7 414.5 191.7 415 192.7 415.4 193.5 415.8 192.1 416.2 194.7 416.7 194 417.1 192.2 417.5 193.4 418 193.5 418.4 193.2 418.8 196.5 419.2 193.8 419.7 194.3 420.1 191.8 420.5 195.5 421 197.1 421.4 200 421.8 193.6 422.2 193.9 422.7 191.1 423.1 193.4 423.5 192 424 192.4 424.4 193.6 424.8 192.8 425.2 192.8 425.7 191.5 426.1 212 426.5 196.6 427 197.7 427.4 195.7 427.8 201.6 428.2 200.9 428.7 195.7 429.1 196 429.5 194.2 430 194.4 430.4 192.8 430.8 191.8 431.2 195.3 431.7 195.4 432.1 198 432.5 197.5 432.9 193.8 433.4 196.5 433.8 191.4 434.2 192.6 434.7 192.5 435.1 192.4 435.5 192 435.9 189.8 436.4 188.8 436.8 210 437.2 191.6 437.7 191.2 438.1 188.4 438.5 189 438.9 189.8 439.4 186 439.8 188.1 440.2 191.2 440.7 192.7 441.1 192.2 441.5 196.2 441.9 197.5 442.4 197.5 442.8 199.2 443.2 194.4 443.7 192.3 444.1 197.7 444.5 195 444.9 195.6 445.4 192.8 445.8 195.6 446.2 197.1 446.7 195.2 447.1 193.7 447.5 193.4 447.9 192.4 448.4 197.3 448.8 197.2 449.2 197.4 449.7 193.9 450.1 198.5 450.5 197.2 450.9 195.8 451.4 194.5 451.8 196.3 452.2 192.5 452.7 195 453.1 193.5 453.5 191.7 453.9 192.9 454.4 196.7 454.8 193.5 455.2 192.1 455.6 193.4 456.1 191.8 456.5 193.9 456.9 200.4 457.4 196.9 457.8 193.4 458.2 192.7 458.6 198.6 459.1 196 459.5 195.7 459.9 199.2 460.4 198 460.8 194.3 461.2 193.5 461.6 197.2 462.1 197.4 462.5 194.1 462.9 196 463.4 199.1 463.8 195.6 464.2 194.5 464.6 191.6 465.1 189.5 465.5 192.7 465.9 199.5 466.4 198.9 466.8 197.8 467.2 199.6 467.6 197.8 468.1 195.6 468.5 193.7 468.9 193.3 469.4 190.6 469.8 193.4 470.2 193.5 470.6 199.8 471.1 195.2 471.5 192 471.9 190.5 472.4 190.7 472.8 194.3 473.2 193.3 473.6 196.2 474.1 197.8 474.5 193.6 474.9 200.1 475.4 197.7 475.8 193.3 476.2 191.7 476.6 193.4 477.1 190.4 477.5 191.4 477.9 189.9 478.4 191.6 478.8 191.1 479.2 214 479.6 197.2 480.1 193.9 480.5 197.5 480.9 196.6 481.3 192.6 481.8 199.1 482.2 211.8 482.6 195.3 483.1 193.3 483.5 200.9 483.9 198.9 484.3 196.8 484.8 196.4 485.2 195.3 485.6 198 486.1 197.3 486.5 192.3 486.9 192.8 487.3 193.6 487.8 200.4 488.2 198.5 488.6 197.8 489.1 194.6 489.5 195.3 489.9 194.3 490.3 196.2 490.8 193.5 491.2 195.5 491.6 201.9 492.1 201.2 492.5 200.9 492.9 199.8 493.3 204.3 493.8 201.2 494.2 210.7 494.6 198.8 495.1 203 495.5 200.9 495.9 213.9 496.3 206.7 496.8 201.8 497.2 202.8 497.6 199 498.1 195.7 498.5 199.4 498.9 201.8 499.3 198.4 499.8 199.2 500.2 197.7 500.6 198.5 501.1 203 501.5 204.2 501.9 198.7 502.3 203.6 502.8 204.5 503.2 200.7 503.6 199.7 504 200.4 504.5 203.2 504.9 212 505.3 200.1 505.8 200.1 506.2 200.8 506.6 200.4 507 202.4 507.5 201.8 507.9 197.4 508.3 196 508.8 201.8 509.2 196.1 509.6 207 510 196.7 510.5 195.9 510.9 195.6 511.3 197.5 511.8 198.9 512.2 196.2 512.6 198.4 513 198.9 513.5 193.6 513.9 199.8 514.3 195.3 514.8 196.1 515.2 194.5 515.6 196.7 516 196.5 516.5 195 516.9 199.9 517.3 195.5 517.8 195.5 518.2 191.7 518.6 193.7 519 192.5 519.5 197.8 519.9 199.5 520.3 197.2 520.8 201.4 521.2 197 521.6 194.1 522 196.3 522.5 192.9 522.9 195.5 523.3 200.3 523.8 207 524.2 198.9 524.6 194.5 525 192.8 525.5 199 525.9 197 526.3 194 526.7 193 527.2 208.9 527.6 246 528 194.1 528.5 201.2 528.9 189.5 529.3 205.4 529.7 190.7 530.2 197.4 530.6 192.8 531 203.5 531.5 207.3 531.9 197.5 532.3 194.8 532.7 196.4 533.2 195.8 533.6 193.9 534 192.5 534.5 206.4 534.9 206.1 535.3 199.8 535.7 200.5 536.2 198 536.6 196.7 537 200.5 537.5 195.4 537.9 206.2 538.3 204.9 538.7 194.8 539.2 217.4 539.6 198.2 540 204.7 540.5 200.5 540.9 207.6 541.3 227 541.7 204.5 542.2 194.7 542.6 199.2 543 199 543.5 190.9 543.9 204.1 544.3 193.8 544.7 197 545.2 194.1 545.6 226 546 197.7 546.5 192.5 546.9 199.2 547.3 207.1 547.7 199.4 548.2 216.6 548.6 195.1 549 218 549.4 193.7 549.9 191.3 550.3 192.3 550.7 193.4 551.2 194.3 551.6 197.6 552 211.5 552.4 205.5 552.9 198.3 553.3 201 553.7 198.2 554.2 200.9 554.6 209.9 555 212.1 555.4 215.8 555.9 195.7 556.3 195.9 556.7 192.9 557.2 193.3 557.6 190.9 558 192.6 558.4 195.1 558.9 196.9 559.3 195.9 559.7 197.5 560.2 195 560.6 191.8 561 192.3 561.4 194.9 561.9 197.7 562.3 194.7 562.7 191.7 563.2 219 563.6 192.8 564 193.2 564.4 191.7 564.9 190.3 565.3 197.1 565.7 197.2 566.2 210.1 566.6 204.8 567 191.7 567.4 193.6 567.9 201.5 568.3 192.1 568.7 190.8 569.2 197.7 569.6 193.2 570 202 570.4 204.2 570.9 214 571.3 200.1 571.7 203 572.1 194.2 572.6 197.7 573 194.2 573.4 199.1 573.9 201 574.3 201.2 574.7 204.3 575.1 194.1 575.6 195 576 197.6 576.4 212.9 576.9 196.4 577.3 210.6 577.7 199.7 578.1 193.4 578.6 198.1 579 205.7 579.4 201.2 579.9 204.1 580.3 200.7 580.7 207.6 581.1 207.8 581.6 195.8 582 211 582.4 194.1 582.9 201.9 583.3 200.7 583.7 197.8 584.1 195 584.6 203 585 206.3 585.4 227 585.9 198.7 586.3 195.7 586.7 220.4 587.1 210.9 587.6 202.6 588 211.8 588.4 198.5 588.9 194.2 589.3 194.9 589.7 195.8 590.1 193.6 590.6 195.8 591 232 591.4 193.8 591.9 198.3 592.3 197.6 592.7 203.9 593.1 193.8 593.6 209.4 594 205.2 594.4 199.4 594.8 201.7 595.3 208.2 595.7 199.7 596.1 195.9 596.6 204.8 597 214 597.4 196.1 597.8 199.7 598.3 196.6 598.7 195.7 599.1 194.6 599.6 201 600 194.3 600.4 197.8 600.8 198.9 601.3 195.6 601.7 196 602.1 199.1 602.6 196 603 195.2 603.4 194 603.8 203.8 604.3 203.9 604.7 201.7 605.1 199.1 605.6 198.1 606 198.5 606.4 197.7 606.8 216 607.3 199.6 607.7 198.1 608.1 202 608.6 199.2 609 197.8 609.4 198.8 609.8 197.4 610.3 203.1 610.7 200.7 611.1 205.4 611.6 202 612 199.7 612.4 200.6 612.8 196.9 613.3 200.3 613.7 200 614.1 200.6 614.6 202 615 219 615.4 200.5 615.8 197.7 616.3 198.5 616.7 226.9 617.1 199.1 617.5 198.9 618 206.1 618.4 199.5 618.8 198.3 619.3 197.2 619.7 196.5 620.1 196.1 620.5 196.8 621 209.2 621.4 203.5 621.8 202.1 622.3 205 622.7 198.5 623.1 208.9 623.5 207.1 624 197.9 624.4 228.4 624.8 205 625.3 198.7 625.7 193.7 626.1 200.9 626.5 201 627 208.4 627.4 198.4 627.8 194 628.3 202.9 628.7 197.2 629.1 198.5 629.5 200.6 630 195.5 630.4 195.3 630.8 233 631.3 196.4 631.7 201.8 632.1 199.6 632.5 207.7 633 201.5 633.4 201.9 633.8 209.7 634.3 198.6 634.7 194 635.1 197.6 635.5 202.3 636 202.7 636.4 196.7 636.8 204.8 637.3 201.7 637.7 194.4 638.1 193.9 638.5 195.3 639 201.9 639.4 195.5 639.8 217 640.2 202 640.7 199.1 641.1 199 641.5 197.7 642 195.4 642.4 196.5 642.8 194.4 643.2 195.6 643.7 194.3 644.1 194 644.5 196 645 195.4 645.4 195.1 645.8 195.5 646.2 197.7 646.7 200.1 647.1 255.5 647.5 197.5 648 197.9 648.4 197.4 648.8 197.7 649.2 200.9 649.7 197.2 650.1 197.8 650.5 199.1 651 197.4 651.4 197.9 651.8 221 652.2 196.4 652.7 201 653.1 202.7 653.5 198.5 654 202.1 654.4 202.7 654.8 200.4 655.2 222 655.7 198.1 656.1 197.6 656.5 201.3 657 196.5 657.4 193.9 657.8 194.5 658.2 194.8 658.7 194.8 659.1 195.2 659.5 191.5 660 197.4 660.4 198.1 660.8 195.7 661.2 197.1 661.7 212 662.1 196 662.5 194.9 662.9 192.7 663.4 199.3 663.8 198.9 664.2 195.8 664.7 195.1 665.1 197.6 665.5 194.9 665.9 201.3 666.4 202 666.8 204.6 667.2 202.5 667.7 197 668.1 193.9 668.5 196.9 668.9 191.6 669.4 192 669.8 196.9 670.2 192.8 670.7 190.8 671.1 189.3 671.5 195.6 671.9 193 672.4 193 672.8 194.7 673.2 196.4 673.7 197.2 674.1 197.8 674.5 197.3 674.9 210.2 675.4 197.8 675.8 195.6 676.2 193.9 676.7 194.3 677.1 198.4 677.5 196 677.9 198.9 678.4 198.3 678.8 196.5 679.2 196.3 679.7 195 680.1 199.3 680.5 208.4 680.9 196.1 681.4 196.1 681.8 200.3 682.2 197 682.7 198.7 683.1 200.9 683.5 217 683.9 199.2 684.4 195.9 684.8 199.4 685.2 203.6 685.6 199.6 686.1 197 686.5 198 686.9 198.2 687.4 199.9 687.8 211.9 688.2 198.1 688.6 194.9 689.1 195.8 689.5 197.9 689.9 199.8 690.4 204 690.8 202.3 691.2 197.6 691.6 201.2 692.1 202.2 692.5 197.7 692.9 195.5 693.4 194 693.8 195.4 694.2 196.3 694.6 195.4 695.1 195.1 695.5 197.5 695.9 200.1 696.4 201.9 696.8 198.2 697.2 204.3 697.6 196 698.1 204.2 698.5 200.8 698.9 209 699.4 197.4 699.8 199.8 700.2 201.4 700.6 207.9 701.1 201.4 701.5 197.6 701.9 198.8 702.4 198.8 702.8 203.9 703.2 213.5 703.6 208.8 704.1 199.3 704.5 207.1 704.9 201.4 705.4 204.6 705.8 197.9 706.2 202.1 706.6 204.3 707.1 207.1 707.5 203.9 707.9 217.6 708.4 200.7 708.8 198.5 709.2 202.4 709.6 198.3 710.1 196.5 710.5 204.4 710.9 203.2 711.3 197.4 711.8 206.4 712.2 207.6 712.6 201.1 713.1 202 713.5 200.2 713.9 198.6 714.3 203.3 714.8 199.3 715.2 198.7 715.6 197.4 716.1 210.9 716.5 207.8 716.9 210.2 717.3 201.8 717.8 198.3 718.2 195.6 718.6 191.9 719.1 201.1 719.5 198.8 719.9 214 720.3 197.6 720.8 197.2 721.2 196 721.6 212.1 722.1 216.4 722.5 205.4 722.9 206.2 723.3 197.1 723.8 203 724.2 202.4 724.6 196 725.1 207 725.5 205.3 725.9 202.5 726.3 200.8 726.8 200.3 727.2 222 727.6 201.2 728.1 204 728.5 203.2 728.9 197.8 729.3 195.7 729.8 194.9 730.2 207.6 730.6 261 731.1 222.2 731.5 247 731.9 198.5 732.3 208 732.8 200.3 733.2 208.2 733.6 201.7 734 195.6 734.5 200.3 734.9 198.9 735.3 196.3 735.8 193.3 736.2 194.2 736.6 206.7 737 200.6 737.5 197.5 737.9 211.9 738.3 211.9 738.8 197 739.2 211.7 739.6 195.2 740 205.6 740.5 210.3 740.9 202.4 741.3 194.9 741.8 196.5 742.2 197.5 742.6 205.7 743 199.7 743.5 197.3 743.9 196.3 744.3 195.6 744.8 192.1 745.2 195.8 745.6 204.9 746 198.7 746.5 197.8 746.9 194.3 747.3 193.2 747.8 192.2 748.2 191.1 748.6 195.1 749 308.5 749.5 196.1 749.9 265 750.3 200.8 750.8 200 751.2 196.5 751.6 202.9 752 196.9 752.5 197.9 752.9 196.1 753.3 198.5 753.8 200.5 754.2 203.6 754.6 197.8 755 200.5 755.5 199.2 755.9 198.9 756.3 210 756.7 198.5 757.2 196 757.6 200.1 758 197.6 758.5 197.1 758.9 198.3 759.3 196.7 759.7 195.3 760.2 199.9 760.6 200.9 761 197.4 761.5 197.2 761.9 195.5 762.3 195 762.7 196.5 763.2 208.5 763.6 196.1 764 195 764.5 197.8 764.9 197.2 765.3 201 765.7 197.4 766.2 195.2 766.6 196.6 767 194.6 767.5 192.1 767.9 195.2 768.3 201.9 768.7 205 769.2 202.4 769.6 199.6 770 198.9 770.5 198 770.9 201.9 771.3 200 771.7 196.7 772.2 218 772.6 196.2 773 199.6 773.5 197.4 773.9 195.9 774.3 197.2 774.7 198 775.2 198.9 775.6 195.4 776 199.7 776.5 197.9 776.9 200.8 777.3 199 777.7 199.8 778.2 205.3 778.6 199.7 779 201.7 779.4 200.8 779.9 199.2 780.3 197.2 780.7 197.8 781.2 197.7 781.6 203.4 782 201.6 782.4 200 782.9 200.3 783.3 201.7 783.7 199.8 784.2 213 784.6 204.8 785 204.8 785.4 202.8 785.9 206.7 786.3 201.5 786.7 202.7 787.2 203 787.6 201.1 788 201.1 788.4 203.8 788.9 203.7 789.3 199.5 789.7 203.8 790.2 203.3 790.6 204.1 791 201.2 791.4 201.3 791.9 205.2 792.3 201.1 792.7 201.5 793.2 199.8 793.6 228 794 202 794.4 202.2 794.9 207.2 795.3 205.3 795.7 205.5 796.2 203.5 796.6 203.7 797 202.8 797.4 199.7 797.9 203.5 798.3 202.6 798.7 203.5 799.2 208.5 799.6 205.5 800 207.3 800.4 214.6 800.9 204.6 801.3 206.4 801.7 205.7 802.1 199.8 802.6 201.6 803 200.7 803.4 212.2 803.9 202.1 804.3 201.1 804.7 202.1 805.1 216 805.6 201.4 806 206.7 806.4 206.9 806.9 206.4 807.3 204.6 807.7 202.2 808.1 205.3 808.6 205.2 809 220.6 809.4 209.6 809.9 206.5 810.3 205.7 810.7 203.1 811.1 207.2 811.6 211 812 215.3 812.4 209.3 812.9 206.4 813.3 207.6 813.7 203 814.1 227.6 814.6 233 815 208.2 815.4 211.7 815.9 210.1 816.3 207.5 816.7 212.9 817.1 205.8 817.6 206.8 818 208.9 818.4 211.8 818.9 206.6 819.3 207.2 819.7 205.6 820.1 205.9 820.6 205 821 207.5 821.4 208.1 821.9 212 822.3 212.9 822.7 207.7 823.1 208.9 823.6 206.5 824 219 824.4 205.3 824.8 208.5 825.3 204.5 825.7 204 826.1 207.2 826.6 205.8 827 205.9 827.4 203.2 827.8 206.4 828.3 203.9 828.7 203.1 829.1 205.2 829.6 203.3 830 202.1 830.4 200.3 830.8 202.8 831.3 201.1 831.7 197.5 832.1 204.1 832.6 202.1 833 202.6 833.4 200.4 833.8 198.1 834.3 198.1 834.7 198.9 835.1 199.8 835.6 209.6 836 216 836.4 199.4 836.8 197.9 837.3 200.7 837.7 197.5 838.1 199.4 838.6 200.3 839 198.4 839.4 198.4 839.8 200.4 840.3 199.8 840.7 199.7 841.1 201.4 841.6 202.1 842 202.5 842.4 197.2 842.8 205.7 843.3 199.9 843.7 215.8 844.1 198.4 844.6 198.2 845 218 845.4 201.7 845.8 199.3 846.3 202.3 846.7 205.6 847.1 201.6 847.5 203.2 848 199.7 848.4 199.1 848.8 202.4 849.3 200.8 849.7 205.4 850.1 201.6 850.5 201.3 851 201.5 851.4 198.7 851.8 201.3 852.3 201.2 852.7 198.9 853.1 195.6 853.5 209.8 854 206.9 854.4 199.7 854.8 201.7 855.3 206.4 855.7 203.5 856.1 196.3 856.5 195.4 857 193.7 857.4 194.1 857.8 206.6 858.3 198.5 858.7 196.7 859.1 192.9 859.5 196.2 860 204.4 860.4 196.7 860.8 227 861.3 208.8 861.7 194.3 862.1 201.8 862.5 199.1 863 201.8 863.4 197 863.8 194.9 864.3 192.7 864.7 194.1 865.1 190.8 865.5 195.9 866 204.7 866.4 204.3 866.8 214 867.3 220 867.7 194.1 868.1 217.1 868.5 201.7 869 195.7 869.4 194.9 869.8 201.5 870.2 194.7 870.7 202.5 871.1 198.1 871.5 206.3 872 195.6 872.4 195.2 872.8 193.6 873.2 200.3 873.7 201.8 874.1 219 874.5 195.9 875 193.7 875.4 194.3 875.8 197.5 876.2 194.3 876.7 197.6 877.1 195.7 877.5 204.1 878 195.7 878.4 197.5 878.8 201.4 879.2 194.8 879.7 200.8 880.1 198.1 880.5 196.3 881 192.8 881.4 194 881.8 194.3 882.2 199.7 882.7 196.9 883.1 199.9 883.5 195.7 884 220 884.4 199.1 884.8 198 885.2 195.9 885.7 193.9 886.1 198.3 886.5 200.4 887 200.8 887.4 196.6 887.8 198.6 888.2 199.6 888.7 199.6 889.1 196.5 889.5 197.3 890 201.2 890.4 205.6 890.8 197.5 891.2 222 891.7 197.6 892.1 201.4 892.5 194.5 892.9 207.9 893.4 206.2 893.8 195.9 894.2 196.2 894.7 201.6 895.1 197.9 895.5 200.6 895.9 198.3 896.4 200.2 896.8 193.4 897.2 211.8 897.7 216.4 898.1 202.8 898.5 200.9 898.9 200 899.4 196.5 899.8 203.5 900.2 194.6 900.7 192.6 901.1 192.1 901.5 204 901.9 199.8 902.4 204 902.8 193.5 903.2 192.7 903.7 191.2 904.1 194.2 904.5 196.9 904.9 201.9 905.4 228 905.8 197.5 906.2 200.3 906.7 217.7 907.1 200.8 907.5 201.4 907.9 226 908.4 193.9 908.8 203.7 909.2 196.3 909.7 199.5 910.1 218 910.5 203.7 910.9 196.4 911.4 194.5 911.8 193.2 912.2 195.3 912.7 196.2 913.1 197.5 913.5 199.6 913.9 199.9 914.4 196.4 914.8 196.9 915.2 203.3 915.6 200.6 916.1 197.8 916.5 245 916.9 201.7 917.4 196.2 917.8 198.6 918.2 194.8 918.6 195.4 919.1 193.9 919.5 205 919.9 193.1 920.4 197.4 920.8 194.8 921.2 192.8 921.6 193 922.1 197.5 922.5 195.1 922.9 198.9 923.4 196.6 923.8 196.7 924.2 195.9 924.6 194.2 925.1 192.9 925.5 194.9 925.9 195.7 926.4 197.1 926.8 195.9 927.2 197.2 927.6 199.6 928.1 201.6 928.5 197.1 928.9 195 929.4 195 929.8 199.9 930.2 196.6 930.6 193.5 931.1 193.6 931.5 195.1 931.9 195.9 932.4 195.8 932.8 194.2 933.2 193.2 933.6 192 934.1 191.5 934.5 192.6 934.9 190.6 935.4 245.5 935.8 192.6 936.2 193.5 936.6 194.8 937.1 197.3 937.5 193.7 937.9 192.5 938.4 211.4 938.8 199.2 939.2 196.8 939.6 198.6 940.1 195.6 940.5 197.5 940.9 196.4 941.3 195.3 941.8 198.1 942.2 196.8 942.6 195.9 943.1 195.3 943.5 193.8 943.9 197.7 944.3 194.6 944.8 196.7 945.2 202.1 945.6 201 946.1 198.8 946.5 200.8 946.9 197 947.3 197.7 947.8 198.1 948.2 197.1 948.6 196.3 949.1 192.8 949.5 195.5 949.9 198 950.3 196.8 950.8 193.6 951.2 212 951.6 195.9 952.1 194.5 952.5 196.9 952.9 193.1 953.3 192.3 953.8 194.4 954.2 200.8 954.6 201.2 955.1 198.6 955.5 197.3 955.9 197.6 956.3 197.7 956.8 201.8 957.2 199.4 957.6 197.8 958.1 199.4 958.5 203 958.9 201.8 959.3 196 959.8 197.4 960.2 200.5 960.6 196.4 961.1 196.9 961.5 196.9 961.9 197.5 962.3 230 962.8 197.7 963.2 199.8 963.6 195.1 964 203.2 964.5 200.9 964.9 200.5 965.3 203.4 965.8 202.5 966.2 202.5 966.6 198.4 967 200.4 967.5 199.1 967.9 200.8 968.3 196.3 968.8 196.1 969.2 194.8 969.6 202.5 970 201.1 970.5 292.5 970.9 195.8 971.3 262 971.8 215.5 972.2 204.2 972.6 199.2 973 201.9 973.5 195.5 973.9 200.3 974.3 198 974.8 195.3 975.2 197.8 975.6 195.8 976 228 976.5 225.9 976.9 203.9 977.3 215.8 977.8 208.4 978.2 205.3 978.6 205.9 979 232 979.5 193.9 979.9 205.3 980.3 235.9 980.8 202.7 981.2 203.5 981.6 209.6 982 239 982.5 208.2 982.9 209.6 983.3 204.9 983.8 198.1 984.2 225 984.6 209.8 985 197.1 985.5 196 985.9 200 986.3 200.8 986.7 197.6 987.2 198.8 987.6 202.3 988 198.3 988.5 198.8 988.9 195.3 989.3 191.2 989.7 192.9 990.2 194.3 990.6 194.8 991 192.7 991.5 190.7 991.9 193.3 992.3 193.8 992.7 191.5 993.2 212 993.6 201.2 994 200.3 994.5 199 994.9 195.5 995.3 197.2 995.7 195.4 996.2 195.9 996.6 195.8 997 195.2 997.5 204.5 997.9 202.1 998.3 201.5 998.7 201.6 999.2 196 999.6 193.8 1000 194.8 1000.5 193.4 1000.9 194.2 1001.3 196 1001.7 195.3 1002.2 194.8 1002.6 196.4 1003 194.2 1003.5 196.2 1003.9 196.9 1004.3 194.3 1004.7 196.3 1005.2 194.3 1005.6 208.4 1006 205.1 1006.5 203.3 1006.9 198.6 1007.3 197.8 1007.7 195.9 1008.2 195.6 1008.6 196.5 1009 195.7 1009.4 198.5 1009.9 204.7 1010.3 202.6 1010.7 200.4 1011.2 203.1 1011.6 200.3 1012 200.3 1012.4 197.8 1012.9 200.9 1013.3 205.4 1013.7 201.6 1014.2 199.1 1014.6 198.2 1015 202 1015.4 201.4 1015.9 207.8 1016.3 204.9 1016.7 203.7 1017.2 200.7 1017.6 205.4 1018 199.4 1018.4 199.3 1018.9 199.8 1019.3 195.1 1019.7 198.6 1020.2 198.2 1020.6 200.7 1021 200.1 1021.4 227 1021.9 199.8 1022.3 221.7 1022.7 195.5 1023.2 196 1023.6 197.6 1024 198.2 1024.4 195.6 1024.9 199.3 1025.3 198.3 1025.7 199.4 1026.2 196.5 1026.6 199.6 1027 196.8 1027.4 197 1027.9 197.4 1028.3 195.8 1028.7 196.7 1029.2 199.6 1029.6 197.1 1030 198.2 1030.4 231.5 1030.9 201.2 1031.3 201.9 1031.7 204.7 1032.1 204.3 1032.6 202.5 1033 204.1 1033.4 204.4 1033.9 204.7 1034.3 203.5 1034.7 206.7 1035.1 201.2 1035.6 202.4 1036 203.7 1036.4 197.3 1036.9 200.1 1037.3 205.8 1037.7 201.6 1038.1 202.9 1038.6 201.9 1039 203.3 1039.4 209.4 1039.9 200 1040.3 203.6 1040.7 207.4 1041.1 202.2 1041.6 200 1042 205.4" stroke="#ffff00" stroke-width="1" fill="none" stroke-linejoin="miter"/><path d="M345 80.5H350M345 105.5H350M345 131.5H350M345 156.5H350M345 181.5H350M345 207.5H350M345 232.5H350M345 258.5H350M345 283.5H350M345 308.5H350M345 321.5H350" stroke="#000" stroke-width="1" fill="none"/><path d="M352.5 323V329M470.5 323V329M589.5 323V329M707.5 323V329M826.5 323V329M944.5 323V329M1042.5 323V329" stroke="#000" stroke-width="1" fill="none"/><path d="M1045 81.5H1050M1045 112.5H1050M1045 140.5H1050M1045 167.5H1050M1045 195.5H1050M1045 222.5H1050M1045 250.5H1050M1045 277.5H1050M1045 304.5H1050M1045 321.5H1050M1045 84.5H1050M1045 90.5H1048M1045 96.5H1048M1045 101.5H1048M1045 107.5H1048M1045 118.5H1048M1045 123.5H1048M1045 129.5H1048M1045 134.5H1048M1045 145.5H1048M1045 151.5H1048M1045 156.5H1048M1045 162.5H1048M1045 173.5H1048M1045 178.5H1048M1045 184.5H1048M1045 189.5H1048M1045 200.5H1048M1045 206.5H1048M1045 211.5H1048M1045 217.5H1048M1045 228.5H1048M1045 233.5H1048M1045 239.5H1048M1045 244.5H1048M1045 255.5H1048M1045 261.5H1048M1045 266.5H1048M1045 272.5H1048M1045 283.5H1048M1045 288.5H1048M1045 294.5H1048M1045 299.5H1048M1045 310.5H1048M1045 315.5H1048" stroke="#000" stroke-width="1" fill="none"/><path d="M1084 81.5H1089M1084 105.5H1089M1084 129.5H1089M1084 153.5H1089M1084 177.5H1089M1084 201.5H1089M1084 225.5H1089M1084 249.5H1089M1084 273.5H1089M1084 297.5H1089M1084 321.5H1089M1084 87.5H1087M1084 93.5H1087M1084 99.5H1087M1084 111.5H1087M1084 117.5H1087M1084 123.5H1087M1084 135.5H1087M1084 141.5H1087M1084 147.5H1087M1084 159.5H1087M1084 165.5H1087M1084 171.5H1087M1084 183.5H1087M1084 189.5H1087M1084 195.5H1087M1084 207.5H1087M1084 213.5H1087M1084 219.5H1087M1084 231.5H1087M1084 237.5H1087M1084 243.5H1087M1084 255.5H1087M1084 261.5H1087M1084 267.5H1087M1084 279.5H1087M1084 285.5H1087M1084 291.5H1087M1084 303.5H1087M1084 309.5H1087M1084 315.5H1087" stroke="#000" stroke-width="1" fill="none"/></svg>
<div class="n r" style="right:932.5px;top:72.5px;">7.0763040</div>
<div class="n r" style="right:932.5px;top:97.8684px;">7.0763020</div>
<div class="n r" style="right:932.5px;top:123.237px;">7.0763000</div>
<div class="n r" style="right:932.5px;top:148.605px;">7.0762980</div>
<div class="n r" style="right:932.5px;top:173.974px;">7.0762960</div>
<div class="n r" style="right:932.5px;top:199.342px;">7.0762940</div>
<div class="n r" style="right:932.5px;top:224.711px;">7.0762920</div>
<div class="n r" style="right:932.5px;top:250.079px;">7.0762900</div>
<div class="n r" style="right:932.5px;top:275.447px;">7.0762880</div>
<div class="n r" style="right:932.5px;top:314px;">7.0762850</div>
<div class="n c" style="left:252px;width:200px;top:330px;">9:06:28</div>
<div class="n c" style="left:252px;width:200px;top:347px;">2024/3/31</div>
<div class="n c" style="left:370.39px;width:200px;top:330px;">9:16:28</div>
<div class="n c" style="left:370.39px;width:200px;top:347px;">2024/3/31</div>
<div class="n c" style="left:488.78px;width:200px;top:330px;">9:26:28</div>
<div class="n c" style="left:488.78px;width:200px;top:347px;">2024/3/31</div>
<div class="n c" style="left:607.17px;width:200px;top:330px;">9:36:28</div>
<div class="n c" style="left:607.17px;width:200px;top:347px;">2024/3/31</div>
<div class="n c" style="left:725.56px;width:200px;top:330px;">9:46:28</div>
<div class="n c" style="left:725.56px;width:200px;top:347px;">2024/3/31</div>
<div class="n c" style="left:843.95px;width:200px;top:330px;">9:56:28</div>
<div class="n c" style="left:843.95px;width:200px;top:347px;">2024/3/31</div>
<div class="n c" style="left:941px;width:200px;top:330px;">10:04:45</div>
<div class="n c" style="left:941.5px;width:200px;top:347px;">2024/3/31</div>
<div class="n" style="left:1051.5px;top:73px;color:#e02020">20.79</div>
<div class="n" style="left:1051.5px;top:104.9px;color:#e02020">20.50</div>
<div class="n" style="left:1051.5px;top:132.4px;color:#e02020">20.25</div>
<div class="n" style="left:1051.5px;top:159.8px;color:#e02020">20.00</div>
<div class="n" style="left:1051.5px;top:187.2px;color:#e02020">19.75</div>
<div class="n" style="left:1051.5px;top:214.6px;color:#e02020">19.50</div>
<div class="n" style="left:1051.5px;top:242.1px;color:#e02020">19.25</div>
<div class="n" style="left:1051.5px;top:269.5px;color:#e02020">19.00</div>
<div class="n" style="left:1051.5px;top:296.9px;color:#e02020">18.75</div>
<div class="n" style="left:1051.5px;top:313.5px;color:#e02020">18.60</div>
<div class="n" style="left:1091px;top:73px;color:#22a03a">0.10</div>
<div class="n" style="left:1091px;top:97.06px;color:#22a03a">0.00</div>
<div class="n" style="left:1091px;top:121.12px;color:#22a03a">-0.10</div>
<div class="n" style="left:1091px;top:145.18px;color:#22a03a">-0.20</div>
<div class="n" style="left:1091px;top:169.24px;color:#22a03a">-0.30</div>
<div class="n" style="left:1091px;top:193.3px;color:#22a03a">-0.40</div>
<div class="n" style="left:1091px;top:217.36px;color:#22a03a">-0.50</div>
<div class="n" style="left:1091px;top:241.42px;color:#22a03a">-0.60</div>
<div class="n" style="left:1091px;top:265.48px;color:#22a03a">-0.70</div>
<div class="n" style="left:1091px;top:289.54px;color:#22a03a">-0.80</div>
<div class="n" style="left:1091px;top:313.5px;color:#22a03a">-0.90</div>
<div class="t" style="left:232px;top:194px;width:80px;text-align:center;transform:rotate(-90deg);font-size:12.4px">电压 (V)</div>
<div class="t" style="left:1092.5px;top:191px;width:80px;text-align:center;transform:rotate(90deg)">温度 ℃</div>
<div class="t" style="left:560.5px;top:60.5px;font-family:'DejaVu Sans Condensed','DejaVu Sans',sans-serif;font-stretch:condensed;font-weight:bold;font-size:12.3px;color:#1f5fe0">DCV&nbsp;&nbsp;10V</div>
<div class="t" style="left:730.8px;top:60.5px;font-family:'DejaVu Sans Condensed','DejaVu Sans',sans-serif;font-stretch:condensed;font-weight:bold;font-size:12.3px;color:#1f5fe0">50PLC</div>
<div class="a" style="left:1149px;top:75px;width:108px;height:125px;background:linear-gradient(90deg,#e4e4e4 0,#dadada 6px,#cfcfcf 12px,#cfcfcf 93px,#b4b4b4 99px,#8c8c8c 106px,#7a7a7a 108px);box-shadow:inset 0 1px 0 #e4e4e4,inset 0 -1px 0 #9a9a9a"></div>
<div class="t" style="left:1162.5px;top:80.5px;">滤波值</div>
<div class="a" style="left:1206px;top:77.5px;width:36px;height:19.5px;background:#8c8c8c"></div>
<svg style="left:1205px;top:77.5px" width="38" height="20"><polyline points="2,16 12,3.5 22,16 32,3.5 36,8" fill="none" stroke="#a8ecec" stroke-width="1"/></svg>
<div class="t" style="left:1162.5px;top:105.5px;">温度1</div>
<div class="a" style="left:1206px;top:102.5px;width:36px;height:19.5px;background:#000"></div>
<svg style="left:1205px;top:102.5px" width="38" height="20"><polyline points="2,16 12,3.5 22,16 32,3.5 36,8" fill="none" stroke="#ff0000" stroke-width="1"/></svg>
<div class="t" style="left:1162.5px;top:130.5px;">温度2</div>
<div class="a" style="left:1206px;top:127.5px;width:36px;height:19.5px;background:#000"></div>
<svg style="left:1205px;top:127.5px" width="38" height="20"><polyline points="2,16 12,3.5 22,16 32,3.5 36,8" fill="none" stroke="#00ff00" stroke-width="1"/></svg>
<div class="t" style="left:1162.5px;top:155.5px;">补偿值</div>
<div class="a" style="left:1206px;top:152.5px;width:36px;height:19.5px;background:#8c8c8c"></div>
<svg style="left:1205px;top:152.5px" width="38" height="20"><polyline points="2,16 10.5,3.5 19,16 27.5,3.5 35,15 36,13" fill="none" stroke="#f0a0e0" stroke-width="1"/></svg>
<div class="t" style="left:1162.5px;top:180.5px;">测量值</div>
<div class="a" style="left:1206px;top:177.5px;width:36px;height:19.5px;background:#000"></div>
<svg style="left:1205px;top:177.5px" width="38" height="20"><polyline points="2,16 10.5,3.5 19,16 27.5,3.5 35,15 36,13" fill="none" stroke="#ffff00" stroke-width="1"/></svg>
<div class="a" style="left:1150px;top:205px;width:108px;height:22px;background:#000"></div>
<div class="t c" style="left:1103.5px;width:200px;top:206px;font-family:'DejaVu Sans Condensed','DejaVu Sans',sans-serif;font-stretch:condensed;font-weight:bold;font-size:14.3px;color:#f7c531;height:20px;line-height:20px">07.0762941</div>
<div class="t" style="left:1156px;top:238px;">温度1:</div>
<div class="n r" style="right:45.5px;top:237px;color:#e02020">20.63</div>
<div class="t" style="left:1240px;top:238px;">℃</div>
<div class="t" style="left:1156px;top:259px;">温度2:</div>
<div class="n r" style="right:45.5px;top:258px;color:#22a03a">NaN</div>
<div class="t" style="left:1240px;top:259px;">℃</div>
<div class="t c" style="left:1106px;width:200px;top:277.3px;font-size:16.3px;height:22px;line-height:22px;transform:scaleX(.925)">0.43 SPS</div>
<div class="btn" style="left:1176.5px;top:302.5px;width:79.5px;height:29px;line-height:28px">暂停显示</div>
<div class="btn" style="left:1176.5px;top:340.5px;width:79.5px;height:29px;line-height:28px">清除波形</div>
<div class="t" style="left:1134px;top:322.5px;">导入</div>
<div class="btn" style="left:1125px;top:343px;width:44px;height:27px;"></div>
<svg style="left:1134px;top:348px" width="28" height="18" viewBox="0 0 28 18"><path d="M1.5 16.5 V3.5 L4 1.5 H8.5 L10.5 3.5 H19.5 V8.5 H7 Z" fill="#ffff00" stroke="#000" stroke-width="1.2" stroke-linejoin="round"/><path d="M1.5 16.5 L7 8.5 H26 L20 16.5 Z" fill="#6e6e6e" stroke="#000" stroke-width="1.2" stroke-linejoin="round"/></svg>
<div class="t" style="left:983px;top:373px;">最大偏差:</div>
<div class="n" style="left:1058.5px;top:372px;">1.24&nbsp;&nbsp;PPM</div>
<div class="btn" style="left:1053px;top:394px;width:84.5px;height:28px;line-height:27.5px">剔除异常数据</div>
<div class="t" style="left:1054px;top:434.5px;">异常数据阈值:</div>
<div class="chk" style="left:1155px;top:386px;width:19px;height:19px;"></div>
<div class="led" style="left:1175.5px;top:386px;width:6px;height:19px;"></div>
<div class="t" style="left:1190px;top:389px;">温补 OFF</div>
<div class="chk" style="left:1155px;top:422px;width:19px;height:19px;"></div>
<div class="led" style="left:1175.5px;top:422px;width:6px;height:19px;"></div>
<div class="t" style="left:1190px;top:424px;">滤波 OFF</div>
<div class="t" style="left:270.5px;top:376px;font-size:11.5px">Y轴</div>
<div class="a" style="left:292px;top:372.5px;width:20.5px;height:20.5px;background:#fff;border:1px solid #000"></div>
<div class="t" style="left:314.5px;top:376px;">自动</div>
<div class="t" style="left:356px;top:376px;">上限</div>
<div class="inp" style="left:382px;top:371px;width:96px;height:24px;"></div>
<div class="n" style="left:386.5px;top:375px;">7.07630400</div>
<div class="spn" style="left:462px;top:374px"><i class="u"></i><i class="d"></i></div>
<div class="t" style="left:487.5px;top:376px;">下限</div>
<div class="inp" style="left:514px;top:371px;width:96px;height:24px;"></div>
<div class="n" style="left:518.5px;top:375px;">7.07628500</div>
<div class="spn" style="left:594px;top:374px"><i class="u"></i><i class="d"></i></div>
<div class="t" style="left:655px;top:371.5px;">时间</div>
<div class="a" style="left:723px;top:371.5px;width:192.5px;height:16px;background:linear-gradient(180deg,#e2e2e2 0,#efefef 35%,#f2f2f2 100%);border-top:1px solid #d8d8d8"></div>
<svg style="left:723px;top:371px" width="193" height="17"><path d="M5.5 8.5 L10 5 V12 Z" fill="#404040"/><path d="M187 8.5 L182.5 5 V12 Z" fill="#404040"/></svg>
<div class="a" style="left:819.5px;top:372px;width:7.5px;height:15px;background:linear-gradient(90deg,#f4f4f4,#dcdcdc);border:1px solid #9a9a9a;border-radius:2px"></div>
<div class="a" style="left:821.5px;top:376px;width:1px;height:7px;background:#6a6a6a"></div>
<div class="a" style="left:823.5px;top:376px;width:1px;height:7px;background:#6a6a6a"></div>
<div class="a" style="left:920.5px;top:370.5px;width:39.5px;height:19px;background:#f4f4f4;border:1px solid #b4b8c0;box-shadow:inset 0 0 0 1px #fff"></div>
<div class="n c" style="left:840px;width:200px;top:372px;">0</div>
<div class="t" style="left:280px;top:403.6px;font-size:16.8px;color:#2e8ff0;height:24px;line-height:24px;font-weight:300">线性公式:</div>
<div class="t" style="left:280px;top:440.8px;font-size:16.8px;color:#2e8ff0;height:24px;line-height:24px;font-weight:300">二次公式:</div>
<div class="a" style="left:356px;top:402px;width:301px;height:23px;background:#000"></div>
<div class="a" style="left:356px;top:430px;width:443px;height:42.5px;background:#000"></div>
<div class="fx g" style="left:359.5px;top:402.5px">y=</div>
<div class="fx " style="left:384px;top:403px">-3.50718E-6</div>
<div class="fx g" style="left:457px;top:402.5px">(t -</div>
<div class="fx " style="left:482.5px;top:403px">23.00</div>
<div class="fx g" style="left:516.5px;top:402.5px">)</div>
<div class="fx g" style="left:529.5px;top:402.5px">+</div>
<div class="fx b" style="left:543px;top:403px">7.07628607</div>
<div class="fx g" style="left:359.5px;top:431.3px">y=</div>
<div class="fx " style="left:389.5px;top:431.8px">2.71013E-5</div>
<div class="fx g" style="left:457px;top:431.3px">(t -</div>
<div class="fx " style="left:482.5px;top:431.8px">23.00</div>
<div class="fx g" style="left:516.5px;top:431.3px">)<sup>2</sup></div>
<div class="fx g" style="left:532px;top:431.3px">+</div>
<div class="fx " style="left:543px;top:431.8px">1.27473E-4</div>
<div class="fx g" style="left:613.5px;top:431.3px">(t -</div>
<div class="fx " style="left:636px;top:431.8px">23.00</div>
<div class="fx g" style="left:667px;top:431.3px">)</div>
<div class="fx g" style="left:677.5px;top:431.3px">+</div>
<div class="fx b" style="left:690.5px;top:431.8px">7.07644428</div>
<div class="fx g2" style="left:359.5px;top:450.5px">β&#8201;=</div>
<div class="fx " style="left:397px;top:450.5px">3.8298</div>
<div class="fx " style="left:440.5px;top:450.5px">PPM/℃<sup>2</sup></div>
<div class="fx g2" style="left:511.5px;top:450.5px">α&#8201;=</div>
<div class="fx " style="left:546.5px;top:450.5px">18.014</div>
<div class="fx " style="left:590.5px;top:450.5px">PPM/℃</div>
<div class="t" style="left:671px;top:406px;">参考温度:</div>
<div class="inp" style="left:724px;top:401px;width:58.5px;height:24px;"></div>
<div class="n" style="left:732px;top:405px;">23.00</div>
<div class="spn" style="left:766.5px;top:404px"><i class="u"></i><i class="d"></i></div>
<div class="t" style="left:787px;top:406px;">℃</div>
<div class="a" style="left:816px;top:402px;width:220px;height:74px;border:1px solid #8c8c8c;box-shadow:inset 1px 1px 0 #fff,1px 1px 0 #fff"></div>
<div class="a" style="left:883px;top:394px;width:86px;height:16px;background:#e8e8e8"></div>
<div class="t c" style="left:826px;width:200px;top:395.5px;">选择数据范围</div>
<div class="t" style="left:820.5px;top:419px;color:#9a9a9a">开始:</div>
<div class="inp dis" style="left:851px;top:414.5px;width:67px;height:23.5px;"></div>
<div class="n" style="left:855.5px;top:418px;color:#9a9a9a">0</div>
<div class="spn dis" style="left:902px;top:417.5px"><i class="u"></i><i class="d"></i></div>
<div class="t" style="left:933.5px;top:419px;color:#9a9a9a">结束:</div>
<div class="inp dis" style="left:964px;top:414.5px;width:67px;height:23.5px;"></div>
<div class="n" style="left:968.5px;top:418px;color:#9a9a9a">1611</div>
<div class="spn dis" style="left:1015px;top:417.5px"><i class="u"></i><i class="d"></i></div>
<div class="t" style="left:820.5px;top:450.5px;">自动</div>
<div class="sw" style="left:850px;top:450px"><b style="left:0.5px"></b><b style="left:8.5px"></b></div>
<div class="t" style="left:892.5px;top:450.5px;">手动</div>
<div class="t" style="left:933.5px;top:450.5px;">自动</div>
<div class="sw" style="left:963px;top:450px"><b style="left:0.5px"></b><b style="left:8.5px"></b></div>
<div class="t" style="left:1004.5px;top:450.5px;">手动</div>
<div class="inp" style="left:1053px;top:452px;width:62px;height:24px;"></div>
<div class="n" style="left:1057.5px;top:456px;">10.000</div>
<div class="spn" style="left:1099.5px;top:455px"><i class="u"></i><i class="d"></i></div>
<div class="n" style="left:1118.5px;top:456px;">PPM</div>
<div class="inp" style="left:1155px;top:451px;width:44.5px;height:24px;"></div>
<div class="n" style="left:1159.5px;top:455px;">10</div>
<div class="spn" style="left:1183px;top:454px"><i class="u"></i><i class="d"></i></div>
<div class="t" style="left:1201.5px;top:455.5px;">滤波点数</div>
<div class="t" style="left:355.5px;top:477px;">0漂点温度:</div>
<div class="n" style="left:428.5px;top:476px;">20.65</div>
<div class="t" style="left:465px;top:477px;">℃</div>
<div class="t" style="left:355.5px;top:497.5px;">温漂:</div>
<div class="n" style="left:391px;top:496.5px;">-0.496</div>
<div class="n" style="left:435px;top:496.5px;">PPM/℃</div>
<div class="t" style="left:595.5px;top:477px;">0漂点值:</div>
<div class="n" style="left:650px;top:476px;">7.076294</div>
<div class="t" style="left:595.5px;top:497.5px;">温度1拟合</div>
<div class="t" style="left:694px;top:497.5px;">温度2拟合</div>
<div class="a" style="left:656px;top:497px;width:33px;height:16px;background:#00c8f0;border:1px solid;border-color:#707070 #d8d8d8 #d8d8d8 #707070"></div>
<div class="a" style="left:657px;top:498px;width:7.5px;height:14px;background:#fbb117;border:1px solid;border-color:#ffe08a #a86a00 #a86a00 #ffe08a"></div>
<div class="a" style="left:664.5px;top:498px;width:7.5px;height:14px;background:#fbb117;border:1px solid;border-color:#ffe08a #a86a00 #a86a00 #ffe08a"></div>
<div class="t" style="left:496.5px;top:487.5px;font-family:'Liberation Serif','Noto Serif CJK SC',serif;font-weight:bold;font-size:18.8px;letter-spacing:1.6px;height:28px;line-height:28px">温度特性</div>
<div class="t" style="left:965.5px;top:486.5px;font-family:'Liberation Serif','Noto Serif CJK SC',serif;font-weight:bold;font-size:18.8px;letter-spacing:1.6px;height:28px;line-height:28px">离散曲线</div>
<div class="t" style="left:1062px;top:488px;font-family:'Liberation Serif','Noto Serif CJK SC',serif;font-size:16.3px;height:20px;line-height:20px">0.0636</div>
<svg style="left:0;top:0" width="1276" height="812" shape-rendering="crispEdges"><rect x="351" y="517" width="409" height="233" fill="#f6f6f6"/><rect x="351" y="517" width="408" height="232" fill="#8c8c8c"/><rect x="352" y="518" width="407" height="231" fill="#000"/><path d="M362.5 518V749M372.5 518V749M382.5 518V749M393.5 518V749M403.5 518V749M413.5 518V749M423.5 518V749M433.5 518V749M443.5 518V749M464.5 518V749M474.5 518V749M484.5 518V749M494.5 518V749M504.5 518V749M514.5 518V749M525.5 518V749M535.5 518V749M545.5 518V749M565.5 518V749M575.5 518V749M585.5 518V749M596.5 518V749M606.5 518V749M616.5 518V749M626.5 518V749M636.5 518V749M646.5 518V749M667.5 518V749M677.5 518V749M687.5 518V749M697.5 518V749M707.5 518V749M717.5 518V749M728.5 518V749M738.5 518V749M748.5 518V749" stroke="#084c08" stroke-width="1" fill="none"/><path d="M352 524.5H759M352 530.5H759M352 536.5H759M352 548.5H759M352 554.5H759M352 560.5H759M352 572.5H759M352 579.5H759M352 585.5H759M352 597.5H759M352 603.5H759M352 609.5H759M352 621.5H759M352 627.5H759M352 633.5H759M352 645.5H759M352 651.5H759M352 657.5H759M352 669.5H759M352 675.5H759M352 681.5H759M352 694.5H759M352 700.5H759M352 706.5H759M352 718.5H759M352 724.5H759M352 730.5H759M352 742.5H759M352 748.5H759" stroke="#084c08" stroke-width="1" fill="none"/><path d="M352 542.5H759M352 566.5H759M352 591.5H759M352 615.5H759M352 639.5H759M352 663.5H759M352 687.5H759M352 712.5H759M352 736.5H759" stroke="#087214" stroke-width="1" fill="none"/><path d="M454.5 518V749M555.5 518V749M657.5 518V749" stroke="#087a16" stroke-width="1" fill="none"/><rect x="352" y="615" width="3" height="3" fill="#66f014"/><rect x="352" y="619.5" width="3" height="16.5" fill="#66f014"/><rect x="352" y="639" width="3" height="3.5" fill="#66f014"/><rect x="352" y="659" width="3" height="3" fill="#66f014"/><rect x="473" y="614" width="3" height="54" fill="#66f014"/><rect x="473" y="672" width="3" height="7" fill="#66f014"/><rect x="473" y="719" width="3" height="3" fill="#66f014"/><rect x="615" y="617" width="3" height="46" fill="#66f014"/><rect x="615" y="666" width="3" height="9" fill="#66f014"/><rect x="615" y="684" width="3" height="3" fill="#66f014"/><rect x="615" y="689" width="3" height="3" fill="#66f014"/><rect x="615" y="697" width="3" height="3" fill="#66f014"/><rect x="615" y="707" width="3" height="9" fill="#66f014"/><rect x="615" y="735" width="3" height="3" fill="#66f014"/><rect x="737" y="625" width="3" height="14" fill="#66f014"/><rect x="737" y="645" width="3" height="3" fill="#66f014"/><path d="M352 627.8 450 630.4 556 632.9 637 634.4 738 634.4" stroke="#f01010" stroke-width="1.25" fill="none" shape-rendering="crispEdges"/><path d="M352 629.8 556 633.4 637 635 738 637.4" stroke="#ffff40" stroke-width="1.25" fill="none" shape-rendering="crispEdges"/><rect x="737" y="633" width="3" height="3" fill="#f01010"/><rect x="737" y="636" width="3" height="3" fill="#ffff40"/><path d="M345 518.5H350M345 542.5H350M345 566.5H350M345 591.5H350M345 615.5H350M345 639.5H350M345 663.5H350M345 687.5H350M345 712.5H350M345 736.5H350M345 748.5H350M347 524.5H350M347 530.5H350M347 536.5H350M347 548.5H350M347 554.5H350M347 560.5H350M347 572.5H350M347 579.5H350M347 585.5H350M347 597.5H350M347 603.5H350M347 609.5H350M347 621.5H350M347 627.5H350M347 633.5H350M347 645.5H350M347 651.5H350M347 657.5H350M347 669.5H350M347 675.5H350M347 681.5H350M347 694.5H350M347 700.5H350M347 706.5H350M347 718.5H350M347 724.5H350M347 730.5H350M347 742.5H350M347 748.5H350" stroke="#000" stroke-width="1" fill="none"/><path d="M352.5 750V756M454.5 750V756M555.5 750V756M657.5 750V756M758.5 750V756" stroke="#000" stroke-width="1" fill="none"/></svg>
<div class="n r" style="right:932.5px;top:510.5px;">7.0763040</div>
<div class="n r" style="right:932.5px;top:534.711px;">7.0763020</div>
<div class="n r" style="right:932.5px;top:558.921px;">7.0763000</div>
<div class="n r" style="right:932.5px;top:583.132px;">7.0762980</div>
<div class="n r" style="right:932.5px;top:607.342px;">7.0762960</div>
<div class="n r" style="right:932.5px;top:631.553px;">7.0762940</div>
<div class="n r" style="right:932.5px;top:655.763px;">7.0762920</div>
<div class="n r" style="right:932.5px;top:679.974px;">7.0762900</div>
<div class="n r" style="right:932.5px;top:704.184px;">7.0762880</div>
<div class="n r" style="right:932.5px;top:740.5px;">7.0762850</div>
<div class="n c" style="left:252.5px;width:200px;top:757px;">20.5</div>
<div class="n c" style="left:354px;width:200px;top:757px;">20.55</div>
<div class="n c" style="left:455.5px;width:200px;top:757px;">20.6</div>
<div class="n c" style="left:557px;width:200px;top:757px;">20.65</div>
<div class="n c" style="left:658.5px;width:200px;top:757px;">20.7</div>
<div class="t c" style="left:456px;width:200px;top:775.5px;">温度 ( ℃ )</div>
<div class="t" style="left:232px;top:624px;width:80px;text-align:center;transform:rotate(-90deg);font-size:12.4px">电压 (V)</div>
<svg style="left:0;top:0" width="1276" height="812" shape-rendering="crispEdges"><rect x="856" y="517" width="325" height="230" fill="#f6f6f6"/><rect x="856" y="517" width="324" height="229" fill="#8c8c8c"/><rect x="857" y="518" width="323" height="228" fill="#000"/><path d="M874.5 518V746M890.5 518V746M907.5 518V746M923.5 518V746M956.5 518V746M973.5 518V746M990.5 518V746M1006.5 518V746M1039.5 518V746M1056.5 518V746M1072.5 518V746M1089.5 518V746M1122.5 518V746M1139.5 518V746M1155.5 518V746M1172.5 518V746" stroke="#084c08" stroke-width="1" fill="none"/><path d="M857 524.5H1180M857 529.5H1180M857 535.5H1180M857 541.5H1180M857 552.5H1180M857 558.5H1180M857 563.5H1180M857 569.5H1180M857 580.5H1180M857 586.5H1180M857 592.5H1180M857 597.5H1180M857 609.5H1180M857 614.5H1180M857 620.5H1180M857 626.5H1180M857 637.5H1180M857 643.5H1180M857 649.5H1180M857 654.5H1180M857 666.5H1180M857 671.5H1180M857 677.5H1180M857 683.5H1180M857 694.5H1180M857 700.5H1180M857 705.5H1180M857 711.5H1180M857 722.5H1180M857 728.5H1180M857 734.5H1180M857 739.5H1180" stroke="#084c08" stroke-width="1" fill="none"/><path d="M857 546.5H1180M857 575.5H1180M857 603.5H1180M857 632.5H1180M857 660.5H1180M857 688.5H1180M857 717.5H1180" stroke="#087214" stroke-width="1" fill="none"/><path d="M940.5 518V746M1023.5 518V746M1106.5 518V746" stroke="#3c5800" stroke-width="1" fill="none"/><path d="M857.6 734 858.3 523 859.2 560 859.8 568 860.8 585 862.2 603 864 620 866 635 867.5 641.5 869 648 870.5 654.3 872 659 873.5 662.3 875 664 876.2 666 877.5 668 877.6 694 880 695 881.5 692 883 689 884.5 690.5 886.2 692 888 692 889.5 692.3 891 693.5 892.5 693 894 693.9 895.5 697.1 897 698 898.4 698.6 899.8 700.8 901.1 702.1 902.5 703.5 904.8 706 905 722 906.2 722.5 907.5 721.5 908.8 721.2 910 721 911.2 720.8 912.4 721.4 913.6 721.2 914.8 720.2 916 720 917.3 719.8 918.7 719.7 920 719.5 921.2 719.8 922.4 720.1 923.6 721.2 924.8 720.7 926 721 927.2 720.4 928.4 720.6 929.6 721.6 930.8 722.6 932 722 933.3 720.8 934.6 721.2 935.9 720 937.2 720.4 938.5 720 938.8 690 940.2 689.3 941.6 689.5 943 688 944.5 685.7 946 683.3 947.5 681 949 680.7 950.5 681.1 952 680 953.2 679.5 954.4 679 955.6 678.5 956.8 677.2 958 677.5 959 678 959.3 696.5 960.7 695.8 962.1 696.8 963.6 696.9 965 697 966.2 696.5 967.5 696 968.8 695.5 970 695 971.2 695.6 972.4 696.2 973.6 697.6 974.8 697.4 976 698 977.2 699 978.4 698.4 979.6 699.4 980.8 699.6 982 699 983.5 699.7 985 701.1 986.5 701 987.9 700.9 989.2 700.8 990.6 699.8 992 700.5 993.3 701.8 994.6 703 994.8 688.5 996.1 689.2 997.4 688.2 998.7 688.1 1000 688 1001.2 688.6 1002.4 688.4 1003.6 688.2 1004.8 686.4 1006 687 1006.3 694.5 1007.5 694 1008.8 694.3 1010 693 1011.4 693.5 1012.8 694 1014.2 694.5 1014.5 711 1015.9 711.2 1017.2 712.2 1018.6 714 1020 715 1021.2 715.9 1022.5 716 1023.8 717.6 1025 718.5 1026.2 718.5 1027.5 720 1029.2 718.2 1031 716.5 1032.2 715.8 1033.5 715 1033.7 683.5 1035.1 682.9 1036.6 683.8 1038 684 1039.2 684.2 1040.5 684.3 1041.7 684.5 1041.9 634.5 1043.2 633.3 1044.5 633 1045.7 634.2 1047 633 1048.2 633.8 1049.4 632.3 1050.6 633.1 1051.8 634 1053 633.2 1053.3 644 1054.9 644.2 1056.4 645.1 1058 644.5 1059.5 644.4 1061 645.2 1062.5 644.3 1062.7 716 1063.5 708 1064.8 707.8 1066.1 706.8 1067.4 707.4 1068.7 706.4 1070 707 1071.2 705.8 1072.4 705.4 1073.6 706.6 1074.8 706.2 1076 705 1077.5 703.9 1079 704.3 1080.5 704 1081.8 703.5 1083 703 1084.2 703.3 1085.5 702 1086.8 701.5 1088 701 1089.3 700.5 1090.7 701.7 1092 702 1093.2 701.1 1094.5 700.2 1095.8 699.4 1097 698.5 1098.4 698 1099.8 697.5 1101.2 697 1102.6 697.3 1104 696 1105.2 695.6 1106.4 696 1107.6 695.6 1108.8 693.6 1110 694 1111.4 694.5 1112.8 694.2 1114.2 693.1 1115.6 692.8 1117 692.5 1117.5 695 1119 689 1120.5 683 1122 683.3 1123.5 683.7 1125 684 1126.5 683.8 1128 684.5 1129.5 683.5 1129.7 674 1131.1 674 1132.4 674.8 1133.8 674 1135.1 673.2 1136.5 674 1136.7 682.5 1138.2 682.8 1139.7 683 1139.9 692.5 1141.1 693.2 1142.3 692.3 1143.5 691.4 1144.7 692.1 1145.9 692 1146.1 649.5 1148 652 1149.5 651.3 1151 649 1152.2 649.4 1153.5 648.2 1154.8 647.1 1156 647.5 1157.2 647.8 1158.5 648 1159.8 648.2 1161 648.5 1162.5 648.7 1164 649.6 1165.5 649 1165.7 688.5 1168 690 1169.2 693.2 1170.5 696.5 1171.5 709 1172.5 711 1173.8 709.5 1175 708 1177 710 1178.2 709.1 1179.5 709.7" stroke="#ffd800" stroke-width="1" fill="none"/><path d="M850 518.5H855M850 546.5H855M850 575.5H855M850 603.5H855M850 632.5H855M850 660.5H855M850 688.5H855M850 717.5H855M850 745.5H855" stroke="#000" stroke-width="1" fill="none"/><path d="M857.5 747V753M940.5 747V753M1023.5 747V753M1106.5 747V753M1179.5 747V753" stroke="#000" stroke-width="1" fill="none"/><path d="M1182 519.5H1187M1182 544.5H1187M1182 569.5H1187M1182 594.5H1187M1182 620.5H1187M1182 645.5H1187M1182 670.5H1187M1182 695.5H1187M1182 720.5H1187M1182 746.5H1187M1182 524.5H1185M1182 529.5H1185M1182 534.5H1185M1182 539.5H1185M1182 549.5H1185M1182 554.5H1185M1182 559.5H1185M1182 564.5H1185M1182 574.5H1185M1182 579.5H1185M1182 584.5H1185M1182 589.5H1185M1182 599.5H1185M1182 604.5H1185M1182 610.5H1185M1182 615.5H1185M1182 625.5H1185M1182 630.5H1185M1182 635.5H1185M1182 640.5H1185M1182 650.5H1185M1182 655.5H1185M1182 660.5H1185M1182 665.5H1185M1182 675.5H1185M1182 680.5H1185M1182 685.5H1185M1182 690.5H1185M1182 700.5H1185M1182 705.5H1185M1182 710.5H1185M1182 715.5H1185M1182 725.5H1185M1182 730.5H1185M1182 736.5H1185M1182 741.5H1185" stroke="#000" stroke-width="1" fill="none"/></svg>
<div class="n r" style="right:428px;top:511px;">0.4000</div>
<div class="n r" style="right:428px;top:539.375px;">0.3500</div>
<div class="n r" style="right:428px;top:567.75px;">0.3000</div>
<div class="n r" style="right:428px;top:596.125px;">0.2500</div>
<div class="n r" style="right:428px;top:624.5px;">0.2000</div>
<div class="n r" style="right:428px;top:652.875px;">0.1500</div>
<div class="n r" style="right:428px;top:681.25px;">0.1000</div>
<div class="n r" style="right:428px;top:709.625px;">0.0500</div>
<div class="n r" style="right:428px;top:738px;">0.0000</div>
<div class="n c" style="left:757px;width:200px;top:755px;">9:06:28</div>
<div class="n c" style="left:839.87px;width:200px;top:755px;">9:21:28</div>
<div class="n c" style="left:922.74px;width:200px;top:755px;">9:36:28</div>
<div class="n" style="left:1085px;top:755px;width:25.5px;overflow:hidden">9:51:28</div>
<div class="t c" style="left:929px;width:200px;top:774px;">时间</div>
<div class="n" style="left:1188.5px;top:511.3px;color:#e02020">9.000E-2</div>
<div class="n" style="left:1188.5px;top:536.5px;color:#e02020">8.000E-2</div>
<div class="n" style="left:1188.5px;top:561.7px;color:#e02020">7.000E-2</div>
<div class="n" style="left:1188.5px;top:586.9px;color:#e02020">6.000E-2</div>
<div class="n" style="left:1188.5px;top:612.1px;color:#e02020">5.000E-2</div>
<div class="n" style="left:1188.5px;top:637.3px;color:#e02020">4.000E-2</div>
<div class="n" style="left:1188.5px;top:662.5px;color:#e02020">3.000E-2</div>
<div class="n" style="left:1188.5px;top:687.7px;color:#e02020">2.000E-2</div>
<div class="n" style="left:1188.5px;top:712.9px;color:#e02020">1.000E-2</div>
<div class="n" style="left:1188.5px;top:738.1px;color:#e02020">0.000E+0</div>
<div class="t" style="left:743px;top:623px;width:100px;text-align:center;transform:rotate(-90deg)">离散系数 (ppm)</div>
<div class="a" style="left:25px;top:616px;width:220px;height:173px;background:linear-gradient(90deg,#e2e2e2 0,#d2d2d2 5px,#c2c2c2 14px,#c0c0c0 196px,#b2b2b2 206px,#8e8e8e 216px,#7c7c7c 220px);box-shadow:inset 0 1px 0 #dcdcdc,inset 0 -1px 0 #8a8a8a"></div>
<svg style="left:0;top:0" width="1276" height="812" shape-rendering="crispEdges"><rect x="79" y="625" width="136" height="118" fill="#8a8a8a"/><rect x="80" y="626" width="135" height="117" fill="#000"/><path d="M93.5 626V743M102.5 626V743M112.5 626V743M122.5 626V743M132.5 626V743M142.5 626V743M152.5 626V743M162.5 626V743M171.5 626V743M181.5 626V743M191.5 626V743M201.5 626V743M211.5 626V743" stroke="#084c08" stroke-width="1" fill="none"/><path d="M80 631.5H215M80 635.5H215M80 640.5H215M80 645.5H215M80 654.5H215M80 658.5H215M80 663.5H215M80 668.5H215M80 677.5H215M80 682.5H215M80 686.5H215M80 691.5H215M80 700.5H215M80 705.5H215M80 710.5H215M80 714.5H215M80 723.5H215M80 728.5H215M80 733.5H215M80 737.5H215" stroke="#084c08" stroke-width="1" fill="none"/><path d="M80 649.5H215M80 672.5H215M80 696.5H215M80 719.5H215" stroke="#087214" stroke-width="1" fill="none"/><path d="M83.5 626V743" stroke="#087214" stroke-width="1" fill="none"/><rect x="80.5" y="737" width="6.5" height="6" fill="#0a84ff"/><rect x="90" y="740" width="12" height="3" fill="#0a84ff"/><rect x="105" y="741.8" width="11" height="1.2" fill="#0a84ff"/><rect x="119.5" y="741.8" width="11.5" height="1.2" fill="#0a84ff"/><rect x="134" y="741.8" width="12" height="1.2" fill="#0a84ff"/><rect x="149" y="735" width="12" height="8" fill="#0a84ff"/><rect x="164" y="721" width="11" height="22" fill="#0a84ff"/><rect x="178" y="672" width="12" height="71" fill="#0a84ff"/><rect x="193" y="642" width="12" height="101" fill="#0a84ff"/><rect x="208.3" y="714" width="6.7" height="29" fill="#0a84ff"/><path d="M73 627.5H78M73 650.5H78M73 673.5H78M73 696.5H78M73 719.5H78M73 742.5H78" stroke="#000" stroke-width="1" fill="none"/><path d="M80.5 745V750M82.5 745V750M213.5 745V750" stroke="#000" stroke-width="1" fill="none"/></svg>
<div class="n r" style="right:1205.5px;top:619px;">50.0</div>
<div class="n r" style="right:1205.5px;top:642.15px;">40.0</div>
<div class="n r" style="right:1205.5px;top:665.3px;">30.0</div>
<div class="n r" style="right:1205.5px;top:688.45px;">20.0</div>
<div class="n r" style="right:1205.5px;top:711.6px;">10.0</div>
<div class="n r" style="right:1205.5px;top:734.75px;">0.0</div>
<div class="n" style="left:50.5px;top:751.5px;">7.0762922</div>
<div class="n r" style="right:1035px;top:751.5px;">7.0762949</div>
<div class="t" style="left:6.5px;top:675px;width:60px;text-align:center;transform:rotate(-90deg)">计数</div>
<div class="t" style="left:92.5px;top:770px;">样本</div>
<div class="t" style="left:160.5px;top:770px;">全部</div>
<div class="sw" style="left:119px;top:769px"><b style="left:0.5px"></b><b style="left:8.5px"></b></div>
<div class="a" id="wm1" style="left:1109px;top:748px;height:44px;line-height:44px;font-size:31.6px;font-weight:900;color:#164b86;letter-spacing:0px;transform-origin:0 50%;text-shadow:-1px 0 0 #e4e4e4,1px 0 0 #e4e4e4,0 -1px 0 #e4e4e4,0 1px 0 #e4e4e4,-1px -1px 0 #e4e4e4,1px 1px 0 #e4e4e4,-1px 1px 0 #e4e4e4,1px -1px 0 #e4e4e4;">矿石收音机</div>
<div class="a" id="wm2" style="left:1110.5px;top:789px;height:22px;line-height:22px;font-size:16.5px;font-weight:bold;color:#164b86;letter-spacing:0px;text-shadow:-1px 0 0 #e4e4e4,1px 0 0 #e4e4e4,0 -1px 0 #e4e4e4,0 1px 0 #e4e4e4,-1px -1px 0 #e4e4e4,1px 1px 0 #e4e4e4,-1px 1px 0 #e4e4e4,1px -1px 0 #e4e4e4;">www.crystalradio.cn</div>
</div>
</body></html>
